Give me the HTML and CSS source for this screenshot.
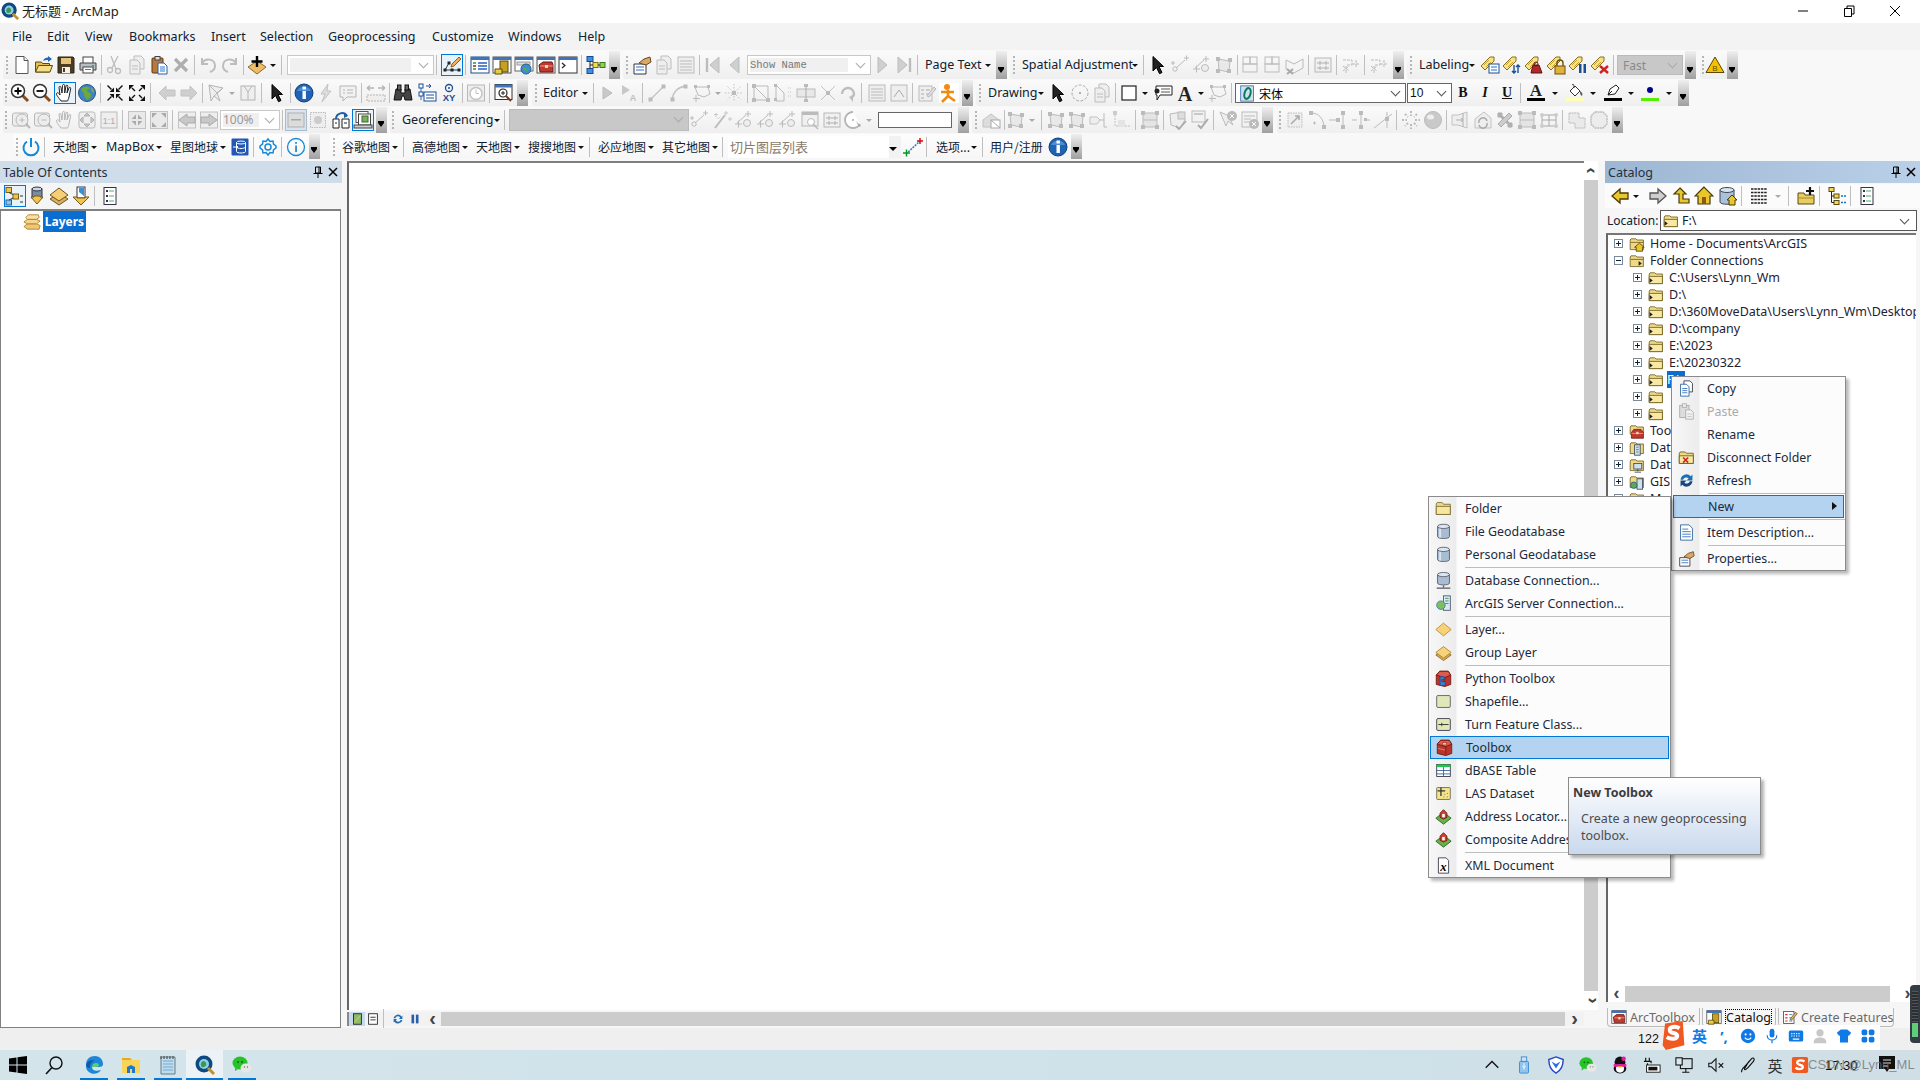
FILE: index.html
```html
<!DOCTYPE html>
<html lang="en">
<head>
<meta charset="utf-8">
<title>ArcMap</title>
<link rel="stylesheet" href="styles.css">
</head>
<body>
<svg class="defs" xmlns="http://www.w3.org/2000/svg">
<!-- colored tools -->
<symbol id="new" viewBox="0 0 20 20"><path d="M4 1.5h8l4 4v13H4z" fill="#fff" stroke="#555"/><path d="M12 1.5v4h4" fill="#eee" stroke="#555"/></symbol>
<symbol id="open" viewBox="0 0 20 20"><path d="M1.5 17V7h6l1 1.500h7V17z" fill="#e3bf55" stroke="#5f4a10"/><path d="M1.500 17l3-6.500h14L16 17z" fill="#f7de85" stroke="#5f4a10"/><path d="M9 6c1-3 3-3.500 5-3.500V1l4 3-4 3V5c-2 0-3 0-5 1z" fill="#2468b8"/></symbol>
<symbol id="save" viewBox="0 0 20 20"><path d="M2 2h15l1 1v15H2z" fill="#4b3d24" stroke="#2d2515"/><rect x="5" y="3" width="10" height="6" fill="#e4c27a"/><rect x="6" y="12" width="8" height="6" fill="#f5f1e6"/><rect x="7" y="13" width="2" height="4" fill="#4b3d24"/></symbol>
<symbol id="print" viewBox="0 0 20 20"><rect x="5" y="2" width="10" height="7" fill="#fff" stroke="#444"/><path d="M2 8h16v7H2z" fill="#b9bec6" stroke="#444"/><rect x="5" y="12" width="10" height="6" fill="#fff" stroke="#444"/><rect x="7" y="14" width="6" height="1" fill="#2d7fd0"/><rect x="14" y="10" width="2" height="1.500" fill="#3a3"/></symbol>
<symbol id="paste" viewBox="0 0 20 20"><rect x="3" y="3" width="11" height="15" rx="1" fill="#b9793a" stroke="#5a3413"/><rect x="6" y="1.500" width="5" height="3.500" fill="#ddd" stroke="#444"/><path d="M9 8h6l3 3v8H9z" fill="#fff" stroke="#2a5fa8"/><path d="M11 12h5M11 14h5M11 16h5" stroke="#2a7ad0"/></symbol>
<symbol id="add" viewBox="0 0 20 20"><path d="M1 12l9-6 9 6-9 7z" fill="#eebc68" stroke="#8a6a25"/><path d="M10 1v11M4.500 6.500h11" stroke="#000" stroke-width="2.400"/></symbol>
<symbol id="edit" viewBox="0 0 20 20"><path d="M3 15h14" stroke="#333"/><path d="M3 15L7 8" stroke="#333"/><rect x="1.500" y="13.500" width="3" height="3" fill="#222"/><rect x="8.500" y="13.500" width="3" height="3" fill="#222"/><rect x="15.500" y="13.500" width="3" height="3" fill="#222"/><rect x="5.500" y="6.500" width="3" height="3" fill="#222"/><path d="M9 12l1-3 7-7 2 2-7 7z" fill="#f2b05a" stroke="#96601b"/></symbol>
<symbol id="wtoc" viewBox="0 0 20 20"><rect x="1" y="2" width="18" height="16" fill="#fff" stroke="#1f4e8c"/><rect x="1" y="2" width="18" height="3" fill="#3f74bb"/><path d="M3 8h3M3 11h3M3 14h3" stroke="#2a9a3a" stroke-width="1.500"/><path d="M8 8h9M8 11h9M8 14h9" stroke="#2a5fc0" stroke-width="1.500"/><path d="M3 11h3" stroke="#d33" stroke-width="1.500"/></symbol>
<symbol id="wcat" viewBox="0 0 20 20"><rect x="1" y="2" width="18" height="16" fill="#fff" stroke="#555"/><rect x="1" y="2" width="18" height="3" fill="#3f74bb"/><rect x="8" y="6" width="8" height="11" fill="#c4a124" stroke="#5a4a0c"/><path d="M3 14h7v5H3z" fill="#e9cf40" stroke="#5a4a0c"/></symbol>
<symbol id="wsearch" viewBox="0 0 20 20"><rect x="1" y="2" width="18" height="14" fill="#fff" stroke="#666"/><rect x="1" y="2" width="18" height="3" fill="#3f74bb"/><rect x="3" y="7" width="13" height="3" fill="#ddd" stroke="#999"/><circle cx="12" cy="14" r="5" fill="#3f8fcc" stroke="#1f5f8c"/><path d="M9 12c2 0 3 2 5 3-2 2-4 0-5-3z" fill="#5ab03a"/></symbol>
<symbol id="wbox" viewBox="0 0 20 20"><rect x="1" y="2" width="18" height="16" fill="#fff" stroke="#555"/><rect x="1" y="2" width="18" height="3" fill="#3f74bb"/><path d="M3 10l4-3h9l1 3v7H4z" fill="#c0392f" stroke="#6e1710"/><path d="M4 11h13" stroke="#e8a09a"/><rect x="9" y="10" width="3" height="3" fill="#e9d8b0"/></symbol>
<symbol id="wpy" viewBox="0 0 20 20"><rect x="1" y="2" width="18" height="16" fill="#fff" stroke="#333"/><rect x="1" y="2" width="18" height="3" fill="#3f74bb"/><path d="M4 8l3 2.500L4 13" fill="none" stroke="#222" stroke-width="1.200"/></symbol>
<symbol id="model" viewBox="0 0 20 20"><rect x="1" y="1.500" width="6" height="5" fill="#3f8fe0" stroke="#134c90"/><rect x="1" y="13.500" width="6" height="5" fill="#3f8fe0" stroke="#134c90"/><rect x="7" y="7.500" width="5" height="5" fill="#f0e04e" stroke="#7a6c10"/><rect x="14" y="7.500" width="5" height="5" fill="#8ed05a" stroke="#3a7a18"/><path d="M4 6.500V10h3M4 13.500V10M12 10h2" fill="none" stroke="#222"/></symbol>
<symbol id="zin" viewBox="0 0 20 20"><path d="M12 12l6 6" stroke="#8a4a1a" stroke-width="3"/><circle cx="8" cy="8" r="6.500" fill="#fff" stroke="#333" stroke-width="1.500"/><path d="M8 4.500v7M4.500 8h7" stroke="#000" stroke-width="1.800"/></symbol>
<symbol id="zout" viewBox="0 0 20 20"><path d="M12 12l6 6" stroke="#8a4a1a" stroke-width="3"/><circle cx="8" cy="8" r="6.500" fill="#fff" stroke="#333" stroke-width="1.500"/><path d="M4.500 8h7" stroke="#000" stroke-width="1.800"/></symbol>
<symbol id="hand" viewBox="0 0 20 20"><path d="M6 18c-2-3-5-6-4.500-7.500S4 10 5 12L4 4.500C4 3 5.800 3 6 4.500L7 10 7.500 2.500C7.800 1 9.600 1 9.700 2.500V10l1.300-7c.4-1.500 2-1 1.800.5L12 10l2-5c.6-1.200 2-.6 1.700.7L14 14c-.5 2-1 3-1.500 4z" fill="#fff" stroke="#222"/></symbol>
<symbol id="hand2" viewBox="0 0 20 20"><path d="M6 18c-2-3-5-6-4.500-7.500S4 10 5 12L4 4.500C4 3 5.800 3 6 4.500L7 10 7.500 2.500C7.800 1 9.600 1 9.700 2.500V10l1.300-7c.4-1.500 2-1 1.800.5L12 10l2-5c.6-1.200 2-.6 1.700.7L14 14c-.5 2-1 3-1.500 4z" fill="#f2f2f2" stroke="#b5b5b5"/></symbol>
<symbol id="globe" viewBox="0 0 20 20"><circle cx="10" cy="10" r="8.500" fill="#3e84c6" stroke="#27557e"/><path d="M5 5c3-2 6-1 8 0-1 2-3 1-3 3 1 2 4 1 4 4s-3 4-4 5c-1-3-3-3-3-6S3 9 5 5z" fill="#6cab3a"/><path d="M14 4c2 2 3 4 3 6-2-1-3-3-3-6z" fill="#a8a040"/></symbol>
<symbol id="fzin" viewBox="0 0 20 20"><g fill="#111"><path d="M9 9V4.500L4.500 9z"/><path d="M11 9V4.500L15.500 9z"/><path d="M9 11v4.500L4.500 11z"/><path d="M11 11v4.500L15.500 11z"/></g><path d="M2.500 2.500l4 4M17.500 2.500l-4 4M2.500 17.500l4-4M17.500 17.500l-4-4" stroke="#111" stroke-width="1.400"/></symbol>
<symbol id="fzout" viewBox="0 0 20 20"><g fill="#111"><path d="M2 2h5L2 7z"/><path d="M18 2h-5l5 5z"/><path d="M2 18v-5l5 5z"/><path d="M18 18h-5l5-5z"/></g><path d="M8 8L5 5M12 8l3-3M8 12l-3 3M12 12l3 3" stroke="#111" stroke-width="1.400"/></symbol>
<symbol id="arrow" viewBox="0 0 20 20"><path d="M5 1.500l10.500 10H11l3 6-2.500 1.200-3-6.200L5 16z" fill="#222" stroke="#000"/></symbol>
<symbol id="info" viewBox="0 0 20 20"><circle cx="10" cy="10" r="9" fill="#1f63b5" stroke="#123d78"/><path d="M3 8a8 8 0 0114 0z" fill="#5f9fe0" opacity=".7"/><rect x="8.500" y="8" width="3.400" height="8" fill="#fff"/><rect x="8.500" y="3.500" width="3.400" height="3" fill="#fff"/></symbol>
<symbol id="binoc" viewBox="0 0 20 20"><path d="M3 6h5v4h4V6h5l2 11h-7l-1-4H9l-1 4H1z" fill="#444" stroke="#111"/><rect x="4.500" y="2" width="3.500" height="5" fill="#666" stroke="#111"/><rect x="12" y="2" width="3.500" height="5" fill="#666" stroke="#111"/></symbol>
<symbol id="route" viewBox="0 0 20 20"><path d="M4 3v8h12M4 11v6" fill="none" stroke="#2a6fc0"/><rect x="2" y="1" width="4" height="4" fill="#fff" stroke="#1b4f95"/><rect x="2" y="9" width="4" height="4" fill="#fff" stroke="#1b4f95"/><path d="M9 3h5l-2-2M14 3l-2 2" fill="none" stroke="#1b4f95"/><rect x="7" y="9" width="12" height="9" fill="#fff" stroke="#1b4f95"/><path d="M9 12h8M9 15h8" stroke="#1b4f95"/></symbol>
<symbol id="xy" viewBox="0 0 20 20"><circle cx="10" cy="5" r="3.500" fill="none" stroke="#1b4f95" stroke-width="1.300"/><circle cx="10" cy="5" r="1" fill="#1b4f95"/><text x="10" y="18" text-anchor="middle" font-family="Liberation Sans" font-weight="700" font-size="9.500" fill="#1b4f95">XY</text></symbol>
<symbol id="viewer" viewBox="0 0 20 20"><rect x="1" y="1.500" width="17" height="15" fill="#fff" stroke="#333"/><rect x="1" y="1.500" width="17" height="3" fill="#3f74bb"/><circle cx="9" cy="10" r="4" fill="#fff" stroke="#222" stroke-width="1.200"/><path d="M7 10h4M9 8v4" stroke="#222"/><path d="M12 13l5 5" stroke="#8a3a1a" stroke-width="2"/></symbol>
<symbol id="man" viewBox="0 0 20 20"><rect width="20" height="20" fill="#fff"/><circle cx="8" cy="4" r="3" fill="#f08a10"/><path d="M2 9h13M9 7v6L3 19M9 13l7 5" fill="none" stroke="#f08a10" stroke-width="2.600"/></symbol>
<symbol id="oicon" viewBox="0 0 20 20"><rect x="2" y="1" width="15" height="18" fill="#cfe0f5" stroke="#3a6fb0"/><ellipse cx="10" cy="10" rx="3.500" ry="6.500" fill="none" stroke="#0f7a55" stroke-width="2.400" transform="rotate(15 10 10)"/></symbol>
<symbol id="circ" viewBox="0 0 20 20"><circle cx="10" cy="10" r="8" fill="none" stroke="#aaa" stroke-dasharray="3 1.500"/><circle cx="10" cy="10" r="1" fill="#999"/></symbol>
<symbol id="rect" viewBox="0 0 20 20"><rect x="3" y="3" width="14" height="14" fill="#fff" stroke="#222" stroke-width="1.200"/></symbol>
<symbol id="call" viewBox="0 0 20 20"><path d="M3 3h16v9H7l-3 5 0-5H3z" fill="#fff" stroke="#222"/><path d="M8 6h9M8 9h9" stroke="#555"/><circle cx="4" cy="8" r="2.500" fill="#222"/></symbol>
<symbol id="bigA" viewBox="0 0 20 20"><text x="10" y="17.500" text-anchor="middle" font-family="Liberation Serif" font-weight="700" font-size="20" fill="#222">A</text></symbol>
<symbol id="fcA" viewBox="0 0 20 20"><text x="10" y="13" text-anchor="middle" font-family="Liberation Serif" font-weight="700" font-size="17" fill="#222">A</text><rect x="1" y="15" width="18" height="3" fill="#000"/></symbol>
<symbol id="fcB" viewBox="0 0 20 20"><path d="M5 8l5-5 5 5-5 5z" fill="#fff" stroke="#333"/><path d="M7 2C9 0 9 3 9 5" fill="none" stroke="#333"/><path d="M15 8c2 1 3 3 2 5-2-1-2-3-2-5z" fill="#555"/><rect x="1" y="15" width="18" height="3" fill="#ffffb4"/></symbol>
<symbol id="fcP" viewBox="0 0 20 20"><path d="M5 12l2-6 6-4 3 3-4 6z" fill="#fff" stroke="#222"/><path d="M5 12l4-4" stroke="#222"/><rect x="1" y="15" width="18" height="3" fill="#000"/></symbol>
<symbol id="fcM" viewBox="0 0 20 20"><circle cx="10" cy="7" r="3" fill="#00008c"/><rect x="1" y="15" width="18" height="3" fill="#55f000"/></symbol>
<!-- labeling -->
<symbol id="tag" viewBox="0 0 20 20"><path d="M1 11l9-9 4 0 0 4-9 9z" fill="#f7e48a" stroke="#8a6d18"/><path d="M4 10l5-5M6 12l5-5" stroke="#c7a42e"/></symbol>
<symbol id="lb1" viewBox="0 0 20 20"><use href="#tag" width="20" height="20"/><rect x="9" y="9" width="10" height="9" fill="#fff" stroke="#1b4f95"/><path d="M11 12h6M11 15h6" stroke="#1b6fc8"/></symbol>
<symbol id="lb2" viewBox="0 0 20 20"><use href="#tag" width="20" height="20"/><path d="M12 10v8m-2-2l2 2 2-2M16 18v-8m-2 2l2-2 2 2" fill="none" stroke="#1b4f95" stroke-width="1.400"/></symbol>
<symbol id="lb3" viewBox="0 0 20 20"><use href="#tag" width="20" height="20"/><path d="M7 18l2-8h6l3 8z" fill="#b0282a" stroke="#5e1012"/><circle cx="12" cy="9" r="2" fill="none" stroke="#5e1012"/></symbol>
<symbol id="lb4" viewBox="0 0 20 20"><use href="#tag" width="20" height="20"/><rect x="9" y="11" width="10" height="8" fill="#e2b13c" stroke="#6f4f0c"/><path d="M11 11V8a3 3 0 016 0v3" fill="none" stroke="#6f4f0c" stroke-width="1.400"/></symbol>
<symbol id="lb5" viewBox="0 0 20 20"><use href="#tag" width="20" height="20"/><rect x="11" y="9" width="2.500" height="9" fill="#1b4f95"/><rect x="15.500" y="9" width="2.500" height="9" fill="#1b4f95"/></symbol>
<symbol id="lb6" viewBox="0 0 20 20"><use href="#tag" width="20" height="20"/><path d="M10 11l8 7M18 11l-8 7" stroke="#d02020" stroke-width="2.400"/></symbol>
<symbol id="warn" viewBox="0 0 20 20"><path d="M10 2l9 15.500H1z" fill="#f6c200" stroke="#5a4700"/><text x="10" y="15.500" text-anchor="middle" font-family="Liberation Sans" font-size="8" fill="#6a4d00">B</text></symbol>
<!-- row 4 -->
<symbol id="power" viewBox="0 0 20 20"><path d="M6 4.500a7.500 7.500 0 108 0" fill="none" stroke="#1788d8" stroke-width="2"/><path d="M10 1v9" stroke="#1788d8" stroke-width="2"/></symbol>
<symbol id="bdb" viewBox="0 0 20 20"><rect x="1.500" y="1.500" width="17" height="17" rx="1" fill="#2257b5"/><ellipse cx="11" cy="5.500" rx="4.500" ry="1.500" fill="none" stroke="#fff"/><path d="M6.500 5.500v9c0 2 9 2 9 0v-9M6.500 10c1 2 8 2 9 0" fill="none" stroke="#fff"/><path d="M3 10h5m-2-2l2 2-2 2" fill="none" stroke="#fff"/></symbol>
<symbol id="gear" viewBox="0 0 20 20"><path d="M10 2l2 2.500 3-.5.500 3L18 9v2l-2.500 2-.5 3-3-.5L10 18l-2-2.500-3 .5-.5-3L2 11V9l2.500-2L5 4l3 .5z" fill="none" stroke="#1788d8" stroke-width="1.500"/><circle cx="10" cy="10" r="3" fill="none" stroke="#1788d8" stroke-width="1.500"/></symbol>
<symbol id="infoo" viewBox="0 0 20 20"><circle cx="10" cy="10" r="8.500" fill="none" stroke="#1788d8" stroke-width="1.300"/><rect x="9.200" y="8.500" width="1.700" height="6.500" fill="#1788d8"/><rect x="9.200" y="5" width="1.700" height="1.800" fill="#1788d8"/></symbol>
<symbol id="tile" viewBox="0 0 20 20"><path d="M3 17L17 4" stroke="#1c7ee0" stroke-width="1.500" stroke-dasharray="2 1"/><path d="M14 4h6M17 1v6" stroke="#e00000" stroke-width="1.400"/><path d="M0 16h7M3.500 12.500v7" stroke="#009a20" stroke-width="1.400"/></symbol>
<!-- row 3 coloured -->
<symbol id="lockp" viewBox="0 0 20 20"><path d="M2 9h6v9H2zM11 9h7v9h-7z" fill="#fff" stroke="#222"/><path d="M5 9C5 3 13 1 16 6" fill="none" stroke="#1b5fa8" stroke-width="2"/><path d="M13 3l4 3-4 2z" fill="#1b5fa8"/><path d="M4 13h2M13 13h3" stroke="#222"/></symbol>
<symbol id="layout" viewBox="0 0 20 20"><rect x="3" y="1.500" width="12" height="11" fill="#fff" stroke="#555"/><rect x="5.500" y="4" width="12" height="11" fill="#fff" stroke="#444"/><rect x="9" y="6" width="6" height="6" fill="#7ab060" stroke="#3a6a2a"/><rect x="1" y="15" width="18" height="3" fill="#ccc" stroke="#444"/></symbol>
<!-- catalog bar -->
<symbol id="cback" viewBox="0 0 20 20"><path d="M2 10l8-7v4h8v6h-8v4z" fill="#e9c52e" stroke="#4a3a05" stroke-width="1.300"/></symbol>
<symbol id="cfwd" viewBox="0 0 20 20"><path d="M18 10l-8-7v4H2v6h8v4z" fill="#cfcfcf" stroke="#555" stroke-width="1.300"/></symbol>
<symbol id="cup" viewBox="0 0 20 20"><path d="M9 2l6 6h-3v5h6v4H8V8H3z" fill="#e9c52e" stroke="#4a3a05" stroke-width="1.200"/></symbol>
<symbol id="chome" viewBox="0 0 20 20"><path d="M10 1L1 10h3v8h12v-8h3z" fill="#e9c52e" stroke="#4a3a05" stroke-width="1.200"/><rect x="8" y="11" width="4" height="7" fill="#8a5a12"/></symbol>
<symbol id="cdbh" viewBox="0 0 20 20"><path d="M2 4v12c0 3 14 3 14 0V4" fill="#a9c2dc" stroke="#445"/><ellipse cx="9" cy="4" rx="7" ry="2.500" fill="#d6e3f0" stroke="#445"/><path d="M14 9l-5 5h2v5h6v-5h2z" fill="#e9c52e" stroke="#4a3a05"/></symbol>
<symbol id="cgrid" viewBox="0 0 20 20"><path d="M2 3h16M2 6.500h16M2 10h16M2 13.500h16M2 17h16" stroke="#222" stroke-dasharray="2.500 .8" stroke-width="1.300"/></symbol>
<symbol id="cfold" viewBox="0 0 20 20"><path d="M2 18V7h6l1 2h9v9z" fill="#e9cc60" stroke="#5a4a10"/><path d="M2 12h16" stroke="#a58a28"/><path d="M14 1v8M10 5h8" stroke="#111" stroke-width="2.200"/></symbol>
<symbol id="ctree" viewBox="0 0 20 20"><rect x="2" y="1.500" width="5" height="4" fill="#f3d75a" stroke="#5a4a10"/><rect x="7" y="8" width="5" height="4" fill="#f3d75a" stroke="#5a4a10"/><rect x="7" y="14.500" width="5" height="4" fill="#f3d75a" stroke="#5a4a10"/><path d="M4.500 5.500V16.500H7M4.500 10H7" fill="none" stroke="#222"/><path d="M14 10h2M17 10h2M14 16.500h2M17 16.500h2" stroke="#1b6fc8" stroke-width="1.400"/></symbol>
<symbol id="clist" viewBox="0 0 20 20"><rect x="4" y="1.500" width="12" height="17" fill="#fff" stroke="#334"/><rect x="6" y="4" width="2" height="2" fill="#334"/><rect x="6" y="9" width="2" height="2" fill="#334"/><rect x="6" y="14" width="2" height="2" fill="#334"/><path d="M9 5h5M9 10h5M9 15h5" stroke="#5a7"/></symbol>
<symbol id="tocdraw" viewBox="0 0 20 20"><rect x="1" y="1.500" width="5.500" height="5" fill="#eec54a" stroke="#7a6010"/><rect x="8" y="8" width="5.500" height="5" fill="#eec54a" stroke="#7a6010"/><rect x="1" y="14" width="5.500" height="5" fill="#8fc2ea" stroke="#2a5f90"/><path d="M4 6.500l4 2M4 14l4-2" stroke="#333"/><path d="M15 10h3M15 16h3" stroke="#333"/></symbol>
<symbol id="tocdb" viewBox="0 0 20 20"><rect x="5" y="3" width="10" height="9" fill="#7a8ca0" stroke="#334"/><ellipse cx="10" cy="3" rx="5" ry="2" fill="#c8d8e8" stroke="#334"/><path d="M4 11h3v-1h6v1h3l-6 7z" fill="#f0c450" stroke="#7a5a10"/></symbol>
<symbol id="toclay" viewBox="0 0 20 20"><path d="M1 13l9-6 9 6-9 6z" fill="#d8b060" stroke="#6a5420"/><path d="M1 9l9-7 9 7-9 6z" fill="#f5cf72" stroke="#6a5420"/></symbol>
<symbol id="tocsrc" viewBox="0 0 20 20"><rect x="6" y="1" width="8" height="11" fill="#fff" stroke="#334"/><path d="M8 2h5v8l-5-4z" fill="#3a8fd0"/><path d="M2 11h4v1h8v-1h4l-8 8z" fill="#f0c450" stroke="#7a5a10"/></symbol>
<symbol id="pin" viewBox="0 0 12 12"><path d="M3.500 1h5v6h-5zM1.500 7.500h9M6 8v4M7 1v6" fill="none" stroke="#000"/></symbol>
<symbol id="close" viewBox="0 0 12 12"><path d="M2 2l8 8M10 2l-8 8" stroke="#000" stroke-width="1.500"/></symbol>
<symbol id="layers" viewBox="0 0 20 20"><path d="M1 15l4 3h13l1-4-4-2H5z" fill="#edc77a" stroke="#b0822a"/><path d="M1 10l4-3h10l4 2-4 3H5z" fill="#f5d68f" stroke="#b0822a"/><path d="M3 5l3-3h11l1 3-3 2H5z" fill="#f8e0a8" stroke="#b0822a"/></symbol>
<!-- tree -->
<symbol id="fold" viewBox="0 0 20 20"><path d="M1.500 17V5l1-1.500h6L10 5h8v12z" fill="#efd887" stroke="#6c5a1a"/><path d="M1.500 8h16.500v9H1.500z" fill="#f8e8a3" stroke="#6c5a1a"/><path d="M2 10l4 3-4 3z" fill="#222"/></symbol>
<symbol id="fhome" viewBox="0 0 20 20"><path d="M1.500 17V5l1-1.500h6L10 5h8v12z" fill="#efd887" stroke="#6c5a1a"/><path d="M2 8h16" stroke="#6c5a1a"/><path d="M13 9l-6 5h2v5h8v-5h2z" fill="#e9c52e" stroke="#4a3a05"/></symbol>
<symbol id="fconn" viewBox="0 0 20 20"><path d="M1.500 17V5l1-1.500h6L10 5h8v12z" fill="#efd887" stroke="#6c5a1a"/><path d="M2 8h16" stroke="#6c5a1a"/><path d="M12 10l4 3-4 3z" fill="#222"/></symbol>
<symbol id="fbox" viewBox="0 0 20 20"><path d="M1.500 14V5l1-1.500h6L10 5h8v9z" fill="#efd887" stroke="#6c5a1a"/><path d="M3 12l3-4h9l3 4v7H3z" fill="#c0392f" stroke="#6e1710"/><path d="M3 13h15" stroke="#eaa"/><rect x="9" y="11" width="3" height="3" fill="#f0d8a0"/></symbol>
<symbol id="fdb" viewBox="0 0 20 20"><path d="M1.500 17V5l1-1.500h6L10 5h8v12z" fill="#efd887" stroke="#6c5a1a"/><rect x="7" y="6" width="7" height="13" fill="#cfe0ee" stroke="#345"/><path d="M9 9h3M9 12h3M9 15h3" stroke="#2a7a5a"/></symbol>
<symbol id="fdbs" viewBox="0 0 20 20"><path d="M1.500 17V5l1-1.500h6L10 5h8v12z" fill="#efd887" stroke="#6c5a1a"/><rect x="6" y="8" width="10" height="7" fill="#cfe0ee" stroke="#345"/><path d="M11 15v3M7 19h8" stroke="#345"/></symbol>
<symbol id="fgis" viewBox="0 0 20 20"><path d="M1.500 17V5l1-1.500h6L10 5h8v12z" fill="#efd887" stroke="#6c5a1a"/><rect x="10" y="6" width="7" height="13" fill="#cfe0ee" stroke="#345"/><circle cx="6" cy="14" r="4" fill="#60a850" stroke="#2a5a90"/></symbol>
<!-- menu -->
<symbol id="mcopy" viewBox="0 0 20 20"><path d="M7 1h7l3 3v10H7z" fill="#fff" stroke="#334"/><path d="M3 5h7l3 3v11H3z" fill="#fff" stroke="#2a5f9a"/><path d="M5 10h6M5 12.500h6M5 15h6" stroke="#2a6fc0"/></symbol>
<symbol id="mpaste" viewBox="0 0 20 20"><rect x="2" y="3" width="11" height="14" fill="#ddd" stroke="#aaa"/><rect x="5" y="1" width="5" height="4" fill="#eee" stroke="#aaa"/><path d="M9 8h6l3 3v8H9z" fill="#f2f2f2" stroke="#aaa"/><path d="M11 13h5M11 16h5" stroke="#bbb"/></symbol>
<symbol id="mdisc" viewBox="0 0 20 20"><path d="M1.500 17V5l1-1.500h6L10 5h8v12z" fill="#efd887" stroke="#6c5a1a"/><path d="M1.500 8H18v9H1.500z" fill="#f8e8a3" stroke="#6c5a1a"/><path d="M6 10l6 6M12 10l-6 6" stroke="#d02020" stroke-width="1.800"/></symbol>
<symbol id="mref" viewBox="0 0 20 20"><path d="M3 9a7 7 0 0112-4l2-2v7h-7l2.500-2.500A4 4 0 006 9z" fill="#1f6fb8"/><path d="M17 11a7 7 0 01-12 4l-2 2v-7h7l-2.500 2.500A4 4 0 0014 11z" fill="#16467e"/></symbol>
<symbol id="mdesc" viewBox="0 0 20 20"><path d="M3 1h10l4 4v14H3z" fill="#fff" stroke="#2a5f9a"/><path d="M5 6h7M5 9h10M5 12h10M5 15h10" stroke="#2a6fc0"/></symbol>
<symbol id="mprop" viewBox="0 0 20 20"><path d="M2 9h12v10H2z" fill="#fff" stroke="#334"/><path d="M4 12h8M4 15h8" stroke="#2a6fc0"/><path d="M7 8l5-4 6-2 1 5-5 3z" fill="#d8a868" stroke="#6a4a20"/></symbol>
<symbol id="mfold" viewBox="0 0 20 20"><path d="M1.500 17V4.500l1-1.500h6L10 5h8v12z" fill="#efd887" stroke="#7a6a30"/><path d="M1.500 7.500H18V17H1.500z" fill="#f6e6a0" stroke="#7a6a30"/></symbol>
<symbol id="mdb" viewBox="0 0 20 20"><path d="M3 4v12c0 3 14 3 14 0V4" fill="#a8bdd4" stroke="#556"/><path d="M6 6v11" stroke="#dfe9f3" stroke-width="2"/><ellipse cx="10" cy="4" rx="7" ry="2.500" fill="#dbe6f1" stroke="#556"/></symbol>
<symbol id="msrv" viewBox="0 0 20 20"><path d="M3 3v10c0 3 14 3 14 0V3" fill="#a8bdd4" stroke="#556"/><ellipse cx="10" cy="3" rx="7" ry="2.500" fill="#dbe6f1" stroke="#556"/><path d="M10 16v2M2 19h16" stroke="#556" stroke-width="1.500"/></symbol>
<symbol id="marc" viewBox="0 0 20 20"><rect x="10" y="1" width="8" height="17" fill="#dce9f5" stroke="#456"/><path d="M12 4h4M12 7h4M12 10h4" stroke="#2a8a5a"/><circle cx="7" cy="12" r="5" fill="#7ec060" stroke="#3a7ab0"/></symbol>
<symbol id="mdia" viewBox="0 0 20 20"><path d="M1 10l9-7.500 9 7.500-9 7.500z" fill="#f6d27a" stroke="#c08a28"/></symbol>
<symbol id="mgrp" viewBox="0 0 20 20"><path d="M1 13l9-6 9 6-9 6.500z" fill="#d8a850" stroke="#8a6a28"/><path d="M1 10l9-7 9 7-9 6.500z" fill="#f6d27a" stroke="#a88030"/></symbol>
<symbol id="mpy" viewBox="0 0 20 20"><path d="M1.500 6l4-4.500h10l3 4.500v11l-7 2.500-10-2.500z" fill="#b9342b" stroke="#6e1710"/><path d="M1.500 6l10 3 7-3-3-4.500h-10z" fill="#dd5a4c" stroke="#6e1710"/><path d="M11.500 9v10" stroke="#7e1f18"/><path d="M6 8h5v3H8v3h4v4H6z" fill="#3f84d8" stroke="#1b4f95"/></symbol>
<symbol id="mshp" viewBox="0 0 20 20"><rect x="2" y="3" width="16" height="14" rx="1.500" fill="#e0e8b8" stroke="#556"/></symbol>
<symbol id="mturn" viewBox="0 0 20 20"><rect x="2" y="3" width="16" height="14" rx="1.500" fill="#e0e8b8" stroke="#334"/><path d="M4 10h5M8 8v4M9 10h7" stroke="#222"/></symbol>
<symbol id="mbox" viewBox="0 0 20 20"><path d="M1.500 6l4-4.500h10l3 4.500v11l-7 2.500-10-2.500z" fill="#b9342b" stroke="#6e1710"/><path d="M1.500 6l10 3 7-3-3-4.500h-10z" fill="#dd5a4c" stroke="#6e1710"/><path d="M11.500 9v10" stroke="#7e1f18"/><rect x="8" y="4.500" width="4" height="2.500" fill="#f0d8a0" stroke="#6e1710" stroke-width=".5"/><path d="M2.500 11l8 2" stroke="#e28a80"/></symbol>
<symbol id="mdbf" viewBox="0 0 20 20"><rect x="2" y="3" width="16" height="14" fill="#fff" stroke="#334"/><rect x="2" y="3" width="16" height="3" fill="#1cc848"/><path d="M2 10h16M2 14h16M10 6v11" stroke="#2a5f9a"/></symbol>
<symbol id="mlas" viewBox="0 0 20 20"><rect x="2" y="3" width="16" height="14" rx="1" fill="#f5e58a" stroke="#665"/><path d="M7 3v10M3 7h9" stroke="#333" stroke-width="1.500"/><path d="M11 11h1M14 10h1M10 14h1M14 14h1" stroke="#556"/></symbol>
<symbol id="mloc" viewBox="0 0 20 20"><path d="M1 12l9-7 9 7-9 7z" fill="#6ab04a" stroke="#2a6020"/><path d="M6 11V6l4-4 4 4v5l-4 2z" fill="#d04030" stroke="#6e1710"/><rect x="8.500" y="7" width="3" height="4" fill="#fff"/></symbol>
<symbol id="mxml" viewBox="0 0 20 20"><path d="M4 1h9l3 3v15H4z" fill="#fff" stroke="#334"/><text x="10" y="16" text-anchor="middle" font-family="Liberation Serif" font-style="italic" font-weight="700" font-size="15" fill="#000">x</text></symbol>
<symbol id="g25c" viewBox="0 0 20 20"><rect x="2" y="3" width="13" height="15" fill="#fff" stroke="#445"/><path d="M4 7h3M4 11h3M4 15h3" stroke="#d03030" stroke-width="1.500"/><path d="M9 7h4M9 11h4M9 15h4" stroke="#2a6fc0"/><path d="M10 13l7-9 2 2-7 8z" fill="#e8b060" stroke="#7a5a20"/></symbol>
<!-- gray -->
<symbol id="g1" viewBox="0 0 20 20"><g fill="none" stroke="#bdbdbd" stroke-width="1.300"><circle cx="5" cy="15" r="2.500"/><circle cx="13" cy="16" r="2.500"/><path d="M7 13L13 1M11 14L6 1"/></g></symbol>
<symbol id="g2" viewBox="0 0 20 20"><g fill="#eee" stroke="#bdbdbd"><path d="M7 1h7l3 3v10H7z"/><path d="M3 5h7l3 3v11H3z"/><path d="M5 11h6M5 14h6"/></g></symbol>
<symbol id="g3" viewBox="0 0 20 20"><path d="M4 4l12 12M16 4L4 16" stroke="#aeaeae" stroke-width="3.200"/></symbol>
<symbol id="g4" viewBox="0 0 20 20"><path d="M4 8c4-6 13-4 13 3 0 3-2 5-5 6M4 3v6h6" fill="none" stroke="#bdbdbd" stroke-width="2"/></symbol>
<symbol id="g5" viewBox="0 0 20 20"><path d="M16 8C12 2 3 4 3 11c0 3 2 5 5 6M16 3v6h-6" fill="none" stroke="#bdbdbd" stroke-width="2"/></symbol>
<symbol id="g6" viewBox="0 0 20 20"><path d="M2 10l7-7v4h9v6H9v4z" fill="#cfcfcf" stroke="#c2c2c2"/></symbol>
<symbol id="g7" viewBox="0 0 20 20"><path d="M18 10l-7-7v4H2v6h9v4z" fill="#cfcfcf" stroke="#c2c2c2"/></symbol>
<symbol id="g8" viewBox="0 0 20 20"><g fill="#eee" stroke="#b5b5b5"><path d="M3 2l14 3-6 5 3 8-6-5-3 5z"/><path d="M3 2l8 8M17 5L8 13"/></g></symbol>
<symbol id="g9" viewBox="0 0 20 20"><g fill="#efefef" stroke="#b5b5b5"><rect x="3" y="3" width="14" height="14"/><path d="M6 3l4 6v8M14 3l-4 6"/></g></symbol>
<symbol id="g10" viewBox="0 0 20 20"><path d="M12 1L5 11h4l-3 8 9-11h-4z" fill="#ddd" stroke="#c2c2c2"/></symbol>
<symbol id="g11" viewBox="0 0 20 20"><g fill="#f2f2f2" stroke="#b5b5b5"><path d="M2 3h16v11H9l-4 4v-4H2z"/><path d="M5 7h2M9 7h6M5 10h2M9 10h6"/></g></symbol>
<symbol id="g12" viewBox="0 0 20 20"><path d="M1 5h7M12 5h7M1 5l3-2.500M1 5l3 2.500M19 5l-3-2.500M19 5l-3 2.500" fill="none" stroke="#b5b5b5" stroke-width="1.300"/><rect x="1" y="12" width="18" height="6" fill="#eee" stroke="#b5b5b5" stroke-dasharray="2 1"/></symbol>
<symbol id="g13" viewBox="0 0 20 20"><rect x="1.500" y="2" width="17" height="16" fill="#eee" stroke="#b8b8b8"/><circle cx="10" cy="10.500" r="6" fill="#fff" stroke="#c2c2c2" stroke-width="1.500"/><path d="M10 6.500v4h3" fill="none" stroke="#c2c2c2"/></symbol>
<symbol id="g14" viewBox="0 0 20 20"><path d="M3 17L17 3" stroke="#c2c2c2" stroke-width="1.300"/><rect x="1.500" y="14.500" width="4" height="4" fill="#bbb"/><rect x="14.500" y="1.500" width="4" height="4" fill="#bbb"/></symbol>
<symbol id="g15" viewBox="0 0 20 20"><path d="M3 17C4 9 9 4 17 3" fill="none" stroke="#c2c2c2" stroke-width="1.300"/><rect x="1.500" y="14.500" width="4" height="4" fill="#bbb"/><rect x="14.500" y="1.500" width="4" height="4" fill="#bbb"/></symbol>
<symbol id="g16" viewBox="0 0 20 20"><path d="M3 4h13l2 7-6 3-6-2z" fill="none" stroke="#bbb"/><path d="M4 12v7M1 15.500h7" stroke="#bbb"/><rect x="2" y="2" width="3" height="3" fill="#bbb"/><rect x="15" y="2" width="3" height="3" fill="#bbb"/></symbol>
<symbol id="g17" viewBox="0 0 20 20"><path d="M10 1v18M1 10h18M3.500 3.500l13 13M16.500 3.500l-13 13" stroke="#c2c2c2" stroke-dasharray="1.500 1.500"/><rect x="8" y="8" width="4" height="4" fill="#bbb"/></symbol>
<symbol id="g18" viewBox="0 0 20 20"><path d="M3 3l14 14H3zM3 3h14v14" fill="none" stroke="#bbb"/><rect x="1" y="1" width="4" height="4" fill="#bbb"/><rect x="1" y="15" width="4" height="4" fill="#bbb"/><rect x="15" y="15" width="4" height="4" fill="#bbb"/></symbol>
<symbol id="g19" viewBox="0 0 20 20"><path d="M3 2l8 8v8H3z" fill="none" stroke="#bbb"/><rect x="1" y="1" width="3" height="3" fill="#bbb"/><rect x="1" y="15" width="3" height="3" fill="#bbb"/><path d="M15 5h4M15 9h4M15 13h4" stroke="#c8c8c8" stroke-dasharray="1 1"/></symbol>
<symbol id="g20" viewBox="0 0 20 20"><rect x="1" y="6" width="18" height="8" fill="#e8e8e8" stroke="#bbb"/><path d="M10 1v18" stroke="#aaa"/><rect x="8" y="1" width="4" height="3" fill="#bbb"/><rect x="8" y="16" width="4" height="3" fill="#bbb"/></symbol>
<symbol id="g21" viewBox="0 0 20 20"><path d="M3 3l14 14M17 3L3 17" stroke="#c2c2c2"/><rect x="8" y="8" width="4" height="4" fill="#bbb"/></symbol>
<symbol id="g22" viewBox="0 0 20 20"><path d="M4 11a6 6 0 1112 0c0 2-2 3-3 3" fill="none" stroke="#bdbdbd" stroke-width="2.400"/><path d="M11 14l4-2v7z" fill="#bdbdbd"/></symbol>
<symbol id="g23" viewBox="0 0 20 20"><rect x="2" y="2" width="16" height="16" fill="#eee" stroke="#bbb"/><path d="M4 6h12M4 9h12M4 12h12M4 15h12" stroke="#bbb"/></symbol>
<symbol id="g24" viewBox="0 0 20 20"><rect x="2" y="2" width="16" height="16" fill="#eee" stroke="#bbb"/><path d="M5 14l5-7 5 7" fill="none" stroke="#aaa"/></symbol>
<symbol id="g25" viewBox="0 0 20 20"><rect x="2" y="3" width="13" height="15" fill="#eee" stroke="#bbb"/><path d="M4 7h3M4 11h3M4 15h3M9 7h4M9 11h4" stroke="#aaa"/><path d="M10 13l7-9 2 2-7 8z" fill="#ddd" stroke="#bbb"/></symbol>
<symbol id="g26" viewBox="0 0 20 20"><circle cx="5" cy="14" r="2.200" fill="none" stroke="#bbb"/><path d="M6 13L15 5" stroke="#bbb"/><path d="M14 3h5M16.500 .5v5M1 8h4M3 6v4" stroke="#bbb"/></symbol>
<symbol id="g27" viewBox="0 0 20 20"><path d="M13 5L3 18" stroke="#bbb" stroke-width="2"/><path d="M14 1v4M12 3h4M4 3v3M2 4.500h4M18 7v4M16 9h4" stroke="#c8c8c8"/><path d="M3 6l3 3 3-3" fill="none" stroke="#c8c8c8" stroke-dasharray="1 1"/></symbol>
<symbol id="g28" viewBox="0 0 20 20"><path d="M3 13L12 5" stroke="#bbb"/><path d="M14 1v6M11 4h6M1 14h7M4.500 10.500v7" stroke="#bbb"/><circle cx="13" cy="13" r="3.500" fill="#eee" stroke="#bbb"/></symbol>
<symbol id="g29" viewBox="0 0 20 20"><rect x="2" y="2" width="16" height="14" fill="#f0f0f0" stroke="#b8b8b8"/><rect x="2" y="2" width="16" height="3" fill="#bbb"/><circle cx="11" cy="12" r="3.500" fill="#fff" stroke="#bbb"/><path d="M13 14l5 5" stroke="#bbb" stroke-width="1.500"/></symbol>
<symbol id="g30" viewBox="0 0 20 20"><rect x="2" y="3" width="16" height="14" fill="#f0f0f0" stroke="#b8b8b8"/><path d="M4 8h12M4 13h12M7 6v4M13 6v4M7 11v4M13 11v4" stroke="#b0b0b0"/></symbol>
<symbol id="g31" viewBox="0 0 20 20"><path d="M10 2a8 8 0 107 12" fill="#fff" stroke="#b5b5b5" stroke-width="1.800"/><circle cx="10" cy="10" r="1" fill="#aaa"/><path d="M13 11l5 5-2 1-1-2z" fill="#aaa"/></symbol>
<symbol id="g32" viewBox="0 0 20 20"><path d="M1 10l8-6 8 6v7H1z" fill="#ddd" stroke="#c2c2c2"/><rect x="9" y="10" width="9" height="8" fill="#fff" stroke="#aaa"/><path d="M9 10l9 8" stroke="#aaa"/></symbol>
<symbol id="g33" viewBox="0 0 20 20"><path d="M4 4l12 2-1 11-10-2z" fill="#e8e8e8" stroke="#bbb"/><rect x="2" y="2" width="4" height="4" fill="#bbb"/><rect x="14" y="3" width="4" height="4" fill="#bbb"/><rect x="2" y="14" width="4" height="4" fill="#bbb"/><rect x="13" y="14" width="4" height="4" fill="#bbb"/></symbol>
<symbol id="g34" viewBox="0 0 20 20"><path d="M1 14h7l3-4-3-3H1z" fill="#eee" stroke="#c2c2c2"/><path d="M10 10h5M15 3v14h3" fill="none" stroke="#bbb"/></symbol>
<symbol id="g35" viewBox="0 0 20 20"><path d="M3 2v14h15" fill="none" stroke="#c2c2c2" stroke-dasharray="2 1"/><rect x="6" y="10" width="7" height="7" fill="#e4e4e4"/><rect x="1" y="1" width="4" height="4" fill="#ccc"/></symbol>
<symbol id="g36" viewBox="0 0 20 20"><path d="M2 4l12-2 3 8-5 8-9-3z" fill="#eee" stroke="#bbb"/><rect x="10" y="2" width="7" height="7" fill="#ddd" stroke="#bbb"/><path d="M8 16l3 3 7-8" fill="none" stroke="#aaa" stroke-width="1.800"/></symbol>
<symbol id="g37" viewBox="0 0 20 20"><rect x="2" y="1" width="13" height="11" fill="#f2f2f2" stroke="#bbb"/><rect x="4" y="3" width="9" height="2" fill="#c8c8c8"/><path d="M8 15l3 3 7-9" fill="none" stroke="#aaa" stroke-width="2"/></symbol>
<symbol id="g38" viewBox="0 0 20 20"><path d="M2 2l6 14 2-5 5 4-3-6 4-1z" fill="#eee" stroke="#bbb"/><circle cx="14" cy="6" r="5" fill="#bbb"/><path d="M12 4l4 4M16 4l-4 4" stroke="#fff"/></symbol>
<symbol id="g39" viewBox="0 0 20 20"><rect x="2" y="2" width="15" height="15" fill="#f2f2f2" stroke="#bbb"/><path d="M4 6h11M4 9h7M4 12h6" stroke="#bbb"/><circle cx="14" cy="14" r="5" fill="#bbb"/><path d="M12 12l4 4M16 12l-4 4" stroke="#fff"/></symbol>
<symbol id="g40" viewBox="0 0 20 20"><rect x="2" y="2" width="7" height="7" fill="none" stroke="#bbb"/><rect x="9" y="2" width="7" height="7" fill="none" stroke="#bbb"/><rect x="2" y="9" width="14" height="8" fill="none" stroke="#bbb"/></symbol>
<symbol id="g41" viewBox="0 0 20 20"><path d="M1 5l8 4 9-5v9l-9 5-8-4z" fill="none" stroke="#bbb"/><path d="M2 14l6 5M8 14l-6 5" stroke="#aaa" stroke-width="2"/></symbol>
<symbol id="g42" viewBox="0 0 20 20"><path d="M2 5h9v5H5M15 5v8M11 9h8M2 16l6-5M2 11l6 5M5 11v8" fill="none" stroke="#bbb" stroke-dasharray="3 1"/></symbol>
<symbol id="g43" viewBox="0 0 20 20"><rect x="3" y="3" width="14" height="14" fill="#eee" stroke="#bbb" stroke-dasharray="1.500 1"/><path d="M6 14L14 6M10 6h4v4" fill="none" stroke="#aaa" stroke-width="1.500"/></symbol>
<symbol id="g44" viewBox="0 0 20 20"><path d="M3 3c8 0 13 6 13 15" fill="none" stroke="#bbb"/><rect x="1" y="1" width="4" height="4" fill="#bbb"/><rect x="14" y="15" width="4" height="4" fill="#bbb"/><path d="M5 13h3M6.500 11.500v3" stroke="#bbb"/></symbol>
<symbol id="g45" viewBox="0 0 20 20"><path d="M1 10h9M15 2v16" stroke="#bbb"/><rect x="8" y="8" width="4" height="4" fill="#bbb"/><rect x="13" y="1" width="4" height="4" fill="#bbb"/><rect x="13" y="15" width="4" height="4" fill="#bbb"/></symbol>
<symbol id="g46" viewBox="0 0 20 20"><path d="M10 1v18M1 10h5M14 10h5" stroke="#bbb"/><rect x="8" y="1" width="4" height="4" fill="#bbb"/><rect x="8" y="15" width="4" height="4" fill="#bbb"/><rect x="13" y="8" width="3" height="3" fill="#bbb"/></symbol>
<symbol id="g47" viewBox="0 0 20 20"><path d="M1 18L19 4M14 2v16" stroke="#bbb"/><rect x="12" y="7" width="4" height="4" fill="#bbb"/></symbol>
<symbol id="g48" viewBox="0 0 20 20"><path d="M10 1v5M10 14v5M1 10h5M14 10h5M4 4l3 3M13 13l3 3M16 4l-3 3M7 13l-3 3" stroke="#bbb" stroke-width="2" stroke-dasharray="2 1.500"/></symbol>
<symbol id="g49" viewBox="0 0 20 20"><circle cx="10" cy="10" r="8.500" fill="#c9c9c9" stroke="#bbb"/><ellipse cx="7.500" cy="7" rx="3.500" ry="2.500" fill="#efefef"/></symbol>
<symbol id="g50" viewBox="0 0 20 20"><path d="M2 5h6l9-3v16l-9-3H2z" fill="#eee" stroke="#c2c2c2"/><path d="M6 10h7m-2-2l2 2-2 2M13 3v14" fill="none" stroke="#b0b0b0"/></symbol>
<symbol id="g51" viewBox="0 0 20 20"><path d="M2 9l9-7 7 6v10H2z" fill="#eee" stroke="#c2c2c2"/><path d="M6 13a4 4 0 018-2M14 13a4 4 0 01-8 2" fill="none" stroke="#aaa" stroke-width="1.500"/></symbol>
<symbol id="g52" viewBox="0 0 20 20"><path d="M3 3l14 14M3 7l4-4M13 17l4-4" stroke="#b0b0b0" stroke-width="3"/><path d="M14 3l3 3-11 11-3-3z" fill="#ccc" stroke="#aaa"/></symbol>
<symbol id="g53" viewBox="0 0 20 20"><rect x="3" y="3" width="14" height="14" fill="#e4e4e4" stroke="#bbb"/><path d="M3 10h14" stroke="#bbb"/><rect x="1" y="1" width="4" height="4" fill="#bbb"/><rect x="15" y="1" width="4" height="4" fill="#bbb"/><rect x="1" y="15" width="4" height="4" fill="#bbb"/><rect x="15" y="15" width="4" height="4" fill="#bbb"/></symbol>
<symbol id="g54" viewBox="0 0 20 20"><path d="M3 5h14v11H3zM3 10h14M10 5v11" fill="none" stroke="#aaa"/><circle cx="3" cy="5" r="2" fill="#ccc"/><circle cx="17" cy="5" r="2" fill="#ccc"/><circle cx="3" cy="16" r="2" fill="#ccc"/><circle cx="17" cy="16" r="2" fill="#ccc"/></symbol>
<symbol id="g55" viewBox="0 0 20 20"><path d="M2 3h10v5h6v10H8v-5H2z" fill="#eaeaea" stroke="#bbb" stroke-dasharray="2 .6"/></symbol>
<symbol id="g56" viewBox="0 0 20 20"><path d="M6 2h8l4 4v8l-4 4H6l-4-4V6z" fill="#ececec" stroke="#bbb" stroke-width="1.400" stroke-dasharray="2 .6"/></symbol>
<symbol id="g57" viewBox="0 0 20 20"><g fill="#ededed" stroke="#b8b8b8"><rect x="1.500" y="3" width="15" height="13" rx="2"/><circle cx="11" cy="10" r="6"/><path d="M8.500 10h5M11 7.500v5"/><path d="M15 14l4 4" stroke-width="2"/></g></symbol>
<symbol id="g58" viewBox="0 0 20 20"><g fill="#ededed" stroke="#b8b8b8"><rect x="1.500" y="3" width="15" height="13" rx="2"/><circle cx="11" cy="10" r="6"/><path d="M8.500 10h5"/><path d="M15 14l4 4" stroke-width="2"/></g></symbol>
<symbol id="g59" viewBox="0 0 20 20"><rect x="2" y="2" width="16" height="16" rx="2" fill="#eee" stroke="#bbb"/><path d="M10 3l3 3H7zM10 17l-3-3h6zM3 10l3-3v6zM17 10l-3 3V7z" fill="#c8c8c8" stroke="#b0b0b0"/></symbol>
<symbol id="g60" viewBox="0 0 20 20"><rect x="2" y="2" width="16" height="16" fill="#eee" stroke="#bbb"/><text x="10" y="14" text-anchor="middle" font-family="Liberation Sans" font-size="9" fill="#aaa">1:1</text></symbol>
<symbol id="g61" viewBox="0 0 20 20"><rect x="1.500" y="1.500" width="17" height="17" fill="#e9e9e9" stroke="#c2c2c2"/><path d="M9 9V4.500L4.500 9zM11 9V4.500L15.500 9zM9 11v4.500L4.500 11zM11 11v4.500l4.500-4.500z" fill="#aaa"/></symbol>
<symbol id="g62" viewBox="0 0 20 20"><rect x="1.500" y="1.500" width="17" height="17" fill="#e9e9e9" stroke="#c2c2c2"/><path d="M3 3h5L3 8zM17 3h-5l5 5zM3 17v-5l5 5zM17 17h-5l5-5z" fill="#aaa"/></symbol>
<symbol id="g63" viewBox="0 0 20 20"><rect x="1.500" y="2" width="17" height="16" fill="#eee" stroke="#c2c2c2"/><path d="M2 10l8-6v3h8v6h-8v3z" fill="#c8c8c8" stroke="#aaa"/></symbol>
<symbol id="g64" viewBox="0 0 20 20"><rect x="1.500" y="2" width="17" height="16" fill="#eee" stroke="#c2c2c2"/><path d="M18 10l-8-6v3H2v6h8v3z" fill="#c8c8c8" stroke="#aaa"/></symbol>
<symbol id="g65" viewBox="0 0 20 20"><rect x="2" y="3" width="16" height="14" fill="#dcdcdc" stroke="#b0b0b0"/><rect x="5" y="9" width="10" height="1.500" fill="#a8a8a8"/></symbol>
<symbol id="g66" viewBox="0 0 20 20"><rect x="2.500" y="2.500" width="15" height="15" fill="#eee" stroke="#bbb" stroke-dasharray="1.500 1"/><circle cx="10" cy="10" r="4" fill="#ccc"/></symbol>
<symbol id="tri" viewBox="0 0 20 20"><path d="M6 4l9 6-9 6z" fill="#c8c8c8" stroke="#bbb"/></symbol>
<symbol id="first" viewBox="0 0 20 20"><path d="M4 3v14" stroke="#bdbdbd" stroke-width="2.400"/><path d="M16 2v16L7 10z" fill="#cfcfcf" stroke="#bdbdbd"/></symbol>
<symbol id="prev" viewBox="0 0 20 20"><path d="M14 2v16L5 10z" fill="#cfcfcf" stroke="#bdbdbd"/></symbol>
<symbol id="next" viewBox="0 0 20 20"><path d="M6 2v16l9-8z" fill="#cfcfcf" stroke="#bdbdbd"/></symbol>
<symbol id="last" viewBox="0 0 20 20"><path d="M16 3v14" stroke="#bdbdbd" stroke-width="2.400"/><path d="M4 2v16l9-8z" fill="#cfcfcf" stroke="#bdbdbd"/></symbol>
<symbol id="tri2" viewBox="0 0 20 20"><path d="M3 2l8 5-8 5z" fill="#c8c8c8"/><text x="14" y="18" text-anchor="middle" font-family="Liberation Sans" font-weight="700" font-size="9" fill="#c0c0c0">A</text></symbol>
<!-- taskbar -->
<symbol id="tstart" viewBox="0 0 20 20"><path d="M1 3.500l7.500-1V9.500H1zM9.500 2.300L19 1v8.500H9.500zM1 10.500h7.500v7L1 16.500zM9.500 10.500H19V19l-9.500-1.300z" fill="#000"/></symbol>
<symbol id="tsearch" viewBox="0 0 20 20"><circle cx="12" cy="8" r="6" fill="none" stroke="#111" stroke-width="1.400"/><path d="M8 12.500L2 19" stroke="#111" stroke-width="1.600"/></symbol>
<symbol id="tedge" viewBox="0 0 20 20"><path d="M2 10C2 4 6 1 11 1c5 0 8 4 8 8 0 3-3 3-6 3H8c0 3 3 5 9 3-2 4-9 5-12 2-3-2-3-5-3-7z" fill="#1c86d8"/><path d="M8 12c0-3 2-4 4-4s3 1 3 3c-1 1-5 1-7 1z" fill="#59d070"/><path d="M2 10c1-4 6-6 9-4-3 0-5 2-5 7-2 0-4-1-4-3z" fill="#1259a8"/></symbol>
<symbol id="tfold" viewBox="0 0 20 20"><path d="M1 3h8l2 2H1z" fill="#e8a820"/><path d="M1 5h18v13H1z" fill="#f8d458"/><path d="M6 18v-6l4-2 4 2v6z" fill="#1f78d0"/><rect x="9" y="14" width="2" height="4" fill="#f8d458"/></symbol>
<symbol id="tnote" viewBox="0 0 20 20"><path d="M3 2h14v17H3z" fill="#bcdcf0" stroke="#6a7a80"/><path d="M5 6h10M5 9h10M5 12h10M5 15h10" stroke="#7aa8c8"/><path d="M3 1v3M6 1v3M9 1v3M12 1v3M15 1v3" stroke="#444"/></symbol>
<symbol id="tarc" viewBox="0 0 20 20"><circle cx="9" cy="9" r="8.500" fill="#0e4a80"/><circle cx="9" cy="9" r="5" fill="#8ed0ee"/><path d="M6 8c2-3 4-2 5 0s0 3-2 4-4-1-3-4z" fill="#3a9a4a"/><path d="M13 13l6 6" stroke="#c09030" stroke-width="3"/></symbol>
<symbol id="twc" viewBox="0 0 20 20"><ellipse cx="8" cy="8" rx="7.500" ry="6.500" fill="#27c227"/><path d="M3 13l0 3 3-2z" fill="#27c227"/><ellipse cx="14" cy="13" rx="5.500" ry="4.500" fill="#e8e8e8"/><circle cx="6" cy="7" r="1" fill="#0a6a0a"/><circle cx="10" cy="7" r="1" fill="#0a6a0a"/><circle cx="12.500" cy="12" r=".7" fill="#666"/><circle cx="15.500" cy="12" r=".7" fill="#666"/></symbol>
<symbol id="tup" viewBox="0 0 20 20"><path d="M3 13l7-7 7 7" fill="none" stroke="#111" stroke-width="1.500"/></symbol>
<symbol id="tusb" viewBox="0 0 20 20"><rect x="7" y="1" width="6" height="5" fill="#cfe3f2" stroke="#3a8ad0"/><rect x="5" y="6" width="10" height="13" rx="1" fill="#8fc4ee" stroke="#3a8ad0"/><path d="M10 8v7M8 11l2 2 2-2" fill="none" stroke="#fff"/></symbol>
<symbol id="tsh" viewBox="0 0 20 20"><path d="M10 1l8 3c0 7-2 12-8 15C4 16 2 11 2 4z" fill="#fff" stroke="#2546c8" stroke-width="1.600"/><path d="M5 6l5 3 5-3-5 8z" fill="#2a70e0"/></symbol>
<symbol id="tqq" viewBox="0 0 20 20"><ellipse cx="10" cy="7" rx="6" ry="6.500" fill="#111"/><ellipse cx="10" cy="14" rx="7" ry="5.500" fill="#111"/><ellipse cx="10" cy="14" rx="4.500" ry="4.500" fill="#fff"/><rect x="3" y="9" width="14" height="3" fill="#e81ca0"/><circle cx="14" cy="3" r="2.500" fill="#e81ca0"/><path d="M7 11h6l-3 2z" fill="#f0a020"/></symbol>
<symbol id="tbat" viewBox="0 0 20 20"><path d="M3 2v4M7 2v4M1 6h8v2M5 8v3" fill="none" stroke="#111" stroke-width="1.300"/><rect x="4" y="10" width="15" height="8" fill="#fff" stroke="#111"/><rect x="6" y="12" width="10" height="4" fill="#111"/></symbol>
<symbol id="tnet" viewBox="0 0 20 20"><rect x="6" y="3" width="13" height="11" fill="none" stroke="#111" stroke-width="1.200"/><rect x="1" y="2" width="7" height="8" fill="#dbe7ec" stroke="#111" stroke-width="1.200"/><path d="M12 14v4M8 18h8" stroke="#111" stroke-width="1.200"/></symbol>
<symbol id="tmute" viewBox="0 0 20 20"><path d="M2 8h3l5-5v14l-5-5H2z" fill="none" stroke="#111" stroke-width="1.200"/><path d="M13 8l5 5M18 8l-5 5" stroke="#111" stroke-width="1.300"/></symbol>
<symbol id="tpen" viewBox="0 0 20 20"><path d="M3 18c-1-3 2-5 5-8l6-7c2-2 4 0 2 3l-6 7c-2 2-4 3-4 1l5-8" fill="none" stroke="#111" stroke-width="1.300"/></symbol>
<symbol id="sogou" viewBox="0 0 27 36"><path d="M3 3L25 0l2 30-23 6-4-6z" fill="#f05a22"/><path d="M21 9c-5-3-13-2-12 3 1 4 10 2 9 7-1 4-8 4-13 1" fill="none" stroke="#fff" stroke-width="5"/></symbol>
<symbol id="tsog" viewBox="0 0 20 20"><rect x="1" y="1" width="18" height="18" rx="2" fill="#f05a22"/><path d="M15 6c-4-2-9-1-8 2 1 3 7 1 6 5-1 2-5 2-8 0" fill="none" stroke="#fff" stroke-width="2.600"/></symbol>
<symbol id="bsmile" viewBox="0 0 20 20"><circle cx="10" cy="10" r="9" fill="#0f7ae5"/><circle cx="7" cy="8" r="1.300" fill="#fff"/><circle cx="13" cy="8" r="1.300" fill="#fff"/><path d="M6 12c2 3 6 3 8 0" fill="none" stroke="#fff" stroke-width="1.500"/></symbol>
<symbol id="bmic" viewBox="0 0 20 20"><rect x="7" y="1" width="6" height="11" rx="3" fill="#0f7ae5"/><path d="M4 9c0 8 12 8 12 0M10 15v4" fill="none" stroke="#0f7ae5" stroke-width="1.500"/></symbol>
<symbol id="bkey" viewBox="0 0 20 20"><rect x="1" y="3" width="18" height="14" rx="2" fill="#0f7ae5"/><path d="M4 7h1.500M7 7h1.500M10 7h1.500M13 7h1.500M4 10h1.500M7 10h1.500M10 10h1.500M13 10h1.500M6 14h8" stroke="#fff" stroke-width="1.500"/></symbol>
<symbol id="buser" viewBox="0 0 20 20"><circle cx="10" cy="6" r="4.500" fill="#c8c8c8"/><path d="M2 19c0-6 4-7 8-7s8 1 8 7z" fill="#c8c8c8"/></symbol>
<symbol id="bshirt" viewBox="0 0 20 20"><path d="M6 2h8l5 4-3 4-1-1v9H5V9l-1 1-3-4z" fill="#0f7ae5"/></symbol>
<symbol id="bgrid" viewBox="0 0 20 20"><rect x="2" y="2" width="7" height="7" rx="2" fill="#0f7ae5"/><rect x="11" y="2" width="7" height="7" rx="2" fill="#0f7ae5"/><rect x="2" y="11" width="7" height="7" rx="2" fill="#0f7ae5"/><rect x="11" y="11" width="7" height="7" rx="2" fill="#0f7ae5"/></symbol>
</svg>

<div class="app">
  <header class="title">
    <svg class="ti"><use href="#tarc"/></svg>
    <span class="ttext">无标题 - ArcMap</span>
    <span class="wbtns">
      <svg class="wb" viewBox="0 0 46 20"><path d="M18 10h10" stroke="#000"/></svg>
      <svg class="wb" viewBox="0 0 46 20"><path d="M18.500 7.500h7v8h-7zM21 7.500V5h7v8h-2.500" fill="none" stroke="#000"/></svg>
      <svg class="wb" viewBox="0 0 46 20"><path d="M18 5l10 10M28 5L18 15" stroke="#000"/></svg>
    </span>
  </header>
  <nav class="menubar">
    <span class="mi m-file">File</span><span class="mi m-edit">Edit</span><span class="mi m-view">View</span><span class="mi m-book">Bookmarks</span><span class="mi m-ins">Insert</span><span class="mi m-sel">Selection</span><span class="mi m-geo">Geoprocessing</span><span class="mi m-cus">Customize</span><span class="mi m-win">Windows</span><span class="mi">Help</span>
  </nav>

  <div class="tools">
    <div class="row r1">
      <div class="tb ml3"><i class="g"></i>
        <svg class="b"><use href="#new"/></svg><svg class="b"><use href="#open"/></svg><svg class="b"><use href="#save"/></svg><svg class="b"><use href="#print"/></svg><i class="n"></i>
        <svg class="b"><use href="#g1"/></svg><svg class="b"><use href="#g2"/></svg><svg class="b"><use href="#paste"/></svg><svg class="b"><use href="#g3"/></svg><i class="n"></i>
        <svg class="b"><use href="#g4"/></svg><svg class="b"><use href="#g5"/></svg><i class="n"></i>
        <svg class="b"><use href="#add"/></svg><i class="d"></i><i class="n"></i>
        <span class="combo w147 ml3"><span class="cv"></span></span><i class="n"></i>
        <svg class="b on ml2"><use href="#edit"/></svg><i class="s"></i>
        <svg class="b"><use href="#wtoc"/></svg><svg class="b"><use href="#wcat"/></svg><svg class="b"><use href="#wsearch"/></svg><svg class="b"><use href="#wbox"/></svg><svg class="b"><use href="#wpy"/></svg><i class="s"></i>
        <svg class="b"><use href="#model"/></svg><i class="h ml2"></i>
      </div>
      <div class="tb ml3"><i class="g"></i>
        <svg class="b"><use href="#mprop"/></svg><svg class="b"><use href="#g2"/></svg><svg class="b"><use href="#g23"/></svg><i class="n"></i>
        <svg class="b"><use href="#first"/></svg><svg class="b"><use href="#prev"/></svg>
        <span class="combo w124 ml1"><span class="cv mono">Show Name</span></span>
        <svg class="b"><use href="#next"/></svg><svg class="b"><use href="#last"/></svg><i class="s"></i>
        <span class="l w58 ml4">Page Text</span><i class="d"></i><i class="h ml2"></i>
      </div>
      <div class="tb ml3"><i class="g"></i>
        <span class="l w108 ml4">Spatial Adjustment</span><i class="d"></i><i class="n"></i>
        <svg class="b ml1"><use href="#arrow"/></svg><svg class="b"><use href="#g26"/></svg><svg class="b"><use href="#g28"/></svg><svg class="b"><use href="#g33"/></svg><i class="n"></i>
        <svg class="b"><use href="#g40"/></svg><svg class="b"><use href="#g40"/></svg><svg class="b"><use href="#g41"/></svg><i class="s"></i>
        <svg class="b"><use href="#g30"/></svg><i class="s"></i><svg class="b"><use href="#g42"/></svg><i class="s"></i><svg class="b"><use href="#g42"/></svg><i class="h ml3"></i>
      </div>
      <div class="tb ml3"><i class="g"></i>
        <span class="l w48 ml4">Labeling</span><i class="d"></i>
        <svg class="b ml1"><use href="#lb1"/></svg><svg class="b"><use href="#lb2"/></svg><svg class="b"><use href="#lb3"/></svg><svg class="b"><use href="#lb4"/></svg><svg class="b"><use href="#lb5"/></svg><svg class="b"><use href="#lb6"/></svg><i class="n"></i>
        <span class="combo w66 ml1 dis"><span class="cv2">Fast</span></span><i class="h ml2"></i>
      </div>
      <div class="tb ml4"><i class="g g6"></i>
        <svg class="b bn"><use href="#warn"/></svg><i class="h ml1"></i>
      </div>
    </div>

    <div class="row r2">
      <div class="tb ml3"><i class="g g6"></i>
        <svg class="b"><use href="#zin"/></svg><svg class="b"><use href="#zout"/></svg><svg class="b on ml1"><use href="#hand"/></svg><svg class="b"><use href="#globe"/></svg><i class="s"></i>
        <svg class="b"><use href="#fzin"/></svg><svg class="b"><use href="#fzout"/></svg><i class="n"></i>
        <svg class="b ml3"><use href="#g6"/></svg><svg class="b"><use href="#g7"/></svg><i class="n"></i>
        <svg class="b"><use href="#g8"/></svg><i class="d gd d9"></i><svg class="b ml1"><use href="#g9"/></svg><i class="n"></i>
        <svg class="b ml2"><use href="#arrow"/></svg><i class="n"></i>
        <svg class="b"><use href="#info"/></svg><svg class="b"><use href="#g10"/></svg><svg class="b"><use href="#g11"/></svg><i class="n"></i>
        <svg class="b ml1"><use href="#g12"/></svg><i class="n"></i>
        <svg class="b"><use href="#binoc"/></svg><svg class="b ml2"><use href="#route"/></svg><svg class="b"><use href="#xy"/></svg><i class="n"></i>
        <svg class="b"><use href="#g13"/></svg><i class="n"></i>
        <svg class="b ml1"><use href="#viewer"/></svg><i class="h ml2"></i>
      </div>
      <div class="tb ml4"><i class="g"></i>
        <span class="l w37 ml3">Editor</span><i class="d"></i><i class="n"></i>
        <svg class="b"><use href="#tri"/></svg><svg class="b"><use href="#tri2"/></svg><i class="s"></i>
        <svg class="b"><use href="#g14"/></svg><svg class="b"><use href="#g15"/></svg><svg class="b ml1"><use href="#g16"/></svg><i class="d gd dn"></i>
        <svg class="b"><use href="#g17"/></svg><i class="n"></i>
        <svg class="b"><use href="#g18"/></svg><svg class="b"><use href="#g19"/></svg><svg class="b ml1"><use href="#g20"/></svg><svg class="b"><use href="#g21"/></svg><svg class="b ml-2"><use href="#g22"/></svg><i class="n"></i>
        <svg class="b ml2"><use href="#g23"/></svg><svg class="b"><use href="#g24"/></svg><i class="n"></i>
        <svg class="b ml1"><use href="#g25"/></svg><svg class="b"><use href="#man"/></svg><i class="h ml2"></i>
      </div>
      <div class="tb ml3"><i class="g"></i>
        <span class="l w48 ml4">Drawing</span><i class="d"></i>
        <svg class="b"><use href="#arrow"/></svg><svg class="b"><use href="#circ"/></svg><svg class="b"><use href="#g2"/></svg><i class="n"></i>
        <svg class="b"><use href="#rect"/></svg><i class="d"></i><svg class="b ml1"><use href="#call"/></svg><svg class="b"><use href="#bigA"/></svg><i class="d dn"></i>
        <svg class="b ml1"><use href="#g16"/></svg><i class="n"></i>
        <span class="combo font ml1"><svg class="oi"><use href="#oicon"/></svg><span class="cjk">宋体</span></span>
        <span class="combo fsize ml1"><span class="szv">10</span></span>
        <span class="fb fbb">B</span><span class="fb fbi">I</span><span class="fb fbu">U</span><i class="n"></i>
        <svg class="b ml2"><use href="#fcA"/></svg><i class="d dn ml3"></i><svg class="b ml4"><use href="#fcB"/></svg><i class="d dn ml2"></i><svg class="b ml4"><use href="#fcP"/></svg><i class="d dn ml2"></i><svg class="b ml3"><use href="#fcM"/></svg><i class="d dn ml3"></i><i class="h ml4"></i>
      </div>
    </div>

    <div class="row r3">
      <div class="tb ml3"><i class="g g6"></i>
        <svg class="b ml1"><use href="#g57"/></svg><svg class="b"><use href="#g58"/></svg><svg class="b"><use href="#hand2"/></svg><svg class="b"><use href="#g59"/></svg><svg class="b"><use href="#g60"/></svg><i class="n"></i>
        <svg class="b ml1"><use href="#g61"/></svg><svg class="b"><use href="#g62"/></svg><i class="n"></i>
        <svg class="b ml1"><use href="#g63"/></svg><svg class="b"><use href="#g64"/></svg>
        <span class="combo w60 dimc"><span class="cv3">100%</span></span><i class="n"></i>
        <svg class="b on2"><use href="#g65"/></svg><svg class="b"><use href="#g66"/></svg><svg class="b ml1"><use href="#lockp"/></svg><svg class="b on"><use href="#layout"/></svg><i class="h ml2"></i>
      </div>
      <div class="tb ml3"><i class="g g6"></i>
        <span class="l w90 ml6">Georeferencing</span><i class="d dn"></i><i class="n"></i>
        <span class="combo w180 ml2 dis flat"></span>
        <svg class="b ml-1"><use href="#g26"/></svg><svg class="b ml1"><use href="#g27"/></svg><svg class="b"><use href="#g28"/></svg><svg class="b"><use href="#g28"/></svg><svg class="b"><use href="#g28"/></svg><svg class="b"><use href="#g29"/></svg><svg class="b"><use href="#g30"/></svg>
        <svg class="b ml-1"><use href="#g31"/></svg><i class="d gd dn"></i>
        <span class="inbox ml4"></span><i class="h ml6"></i>
      </div>
      <div class="tb ml3"><i class="g"></i>
        <svg class="b ml1"><use href="#g32"/></svg><i class="n ml-1"></i>
        <svg class="b ml-2"><use href="#g33"/></svg><i class="d gd dn"></i><i class="s ml2"></i>
        <svg class="b"><use href="#g33"/></svg><svg class="b ml-1"><use href="#g33"/></svg><svg class="b"><use href="#g34"/></svg><svg class="b ml1"><use href="#g35"/></svg><i class="s"></i>
        <svg class="b"><use href="#g53"/></svg><i class="s"></i>
        <svg class="b"><use href="#g36"/></svg><svg class="b"><use href="#g37"/></svg><i class="s"></i>
        <svg class="b"><use href="#g38"/></svg><svg class="b"><use href="#g39"/></svg><i class="h ml1"></i>
      </div>
      <div class="tb ml4"><i class="g g6"></i>
        <svg class="b ml1"><use href="#g43"/></svg><svg class="b ml1"><use href="#g44"/></svg><svg class="b ml-2"><use href="#g45"/></svg><svg class="b ml1"><use href="#g46"/></svg><svg class="b"><use href="#g47"/></svg><i class="n"></i>
        <svg class="b ml1"><use href="#g48"/></svg><svg class="b"><use href="#g49"/></svg><i class="n"></i>
        <svg class="b"><use href="#g50"/></svg><svg class="b ml1"><use href="#g51"/></svg><svg class="b"><use href="#g52"/></svg><svg class="b"><use href="#g53"/></svg><svg class="b"><use href="#g54"/></svg><i class="n"></i>
        <svg class="b ml1"><use href="#g55"/></svg><svg class="b"><use href="#g56"/></svg><i class="h ml2"></i>
      </div>
    </div>

    <div class="row r4">
      <div class="tb light ml13"><i class="g g7"></i>
        <svg class="b"><use href="#power"/></svg><i class="n"></i>
        <span class="l cn w36 ml6">天地图</span><i class="d"></i>
        <span class="l w48 ml6">MapBox</span><i class="d"></i>
        <span class="l cn w48 ml5">星图地球</span><i class="d"></i>
        <svg class="b"><use href="#bdb"/></svg><i class="n"></i>
        <svg class="b ml1"><use href="#gear"/></svg><i class="n"></i>
        <svg class="b ml1"><use href="#infoo"/></svg><i class="h ml2"></i>
      </div>
      <div class="tb light ml10"><i class="g"></i>
        <span class="l cn w48 ml4">谷歌地图</span><i class="d"></i><i class="n"></i>
        <span class="l cn w48 ml6">高德地图</span><i class="d dn"></i>
        <span class="l cn w36 ml6">天地图</span><i class="d dn"></i>
        <span class="l cn w48 ml6">搜搜地图</span><i class="d"></i><i class="n"></i>
        <span class="l cn w48 ml6">必应地图</span><i class="d dn"></i>
        <span class="l cn w48 ml6">其它地图</span><i class="d dn"></i><i class="n"></i>
        <span class="tilec ml3"><span class="cn tiletx">切片图层列表</span><span class="tilea"><i class="d dk"></i></span></span>
        <svg class="b ml1"><use href="#tile"/></svg><i class="n"></i>
        <span class="l cn w33 ml7">选项...</span><i class="d"></i><i class="n"></i>
        <span class="l cn w53 ml5">用户/注册</span>
        <svg class="b ml4"><use href="#info"/></svg><i class="h ml2"></i>
      </div>
    </div>
  </div>

  <main class="main">
    <section class="toc">
      <div class="phead toch"><span>Table Of Contents</span><svg class="pi"><use href="#pin"/></svg><svg class="pi"><use href="#close"/></svg></div>
      <div class="pbar tocb">
        <svg class="b on ml4"><use href="#tocdraw"/></svg><svg class="b"><use href="#tocdb"/></svg><svg class="b"><use href="#toclay"/></svg><svg class="b"><use href="#tocsrc"/></svg><i class="n"></i><svg class="b ml2"><use href="#clist"/></svg>
      </div>
      <div class="toctree">
        <div class="layer"><svg class="li"><use href="#layers"/></svg><span class="lsel">Layers</span></div>
      </div>
    </section>

    <section class="mapcol">
      <div class="mapbox"></div>
      <div class="mapbar">
        <svg class="mb act" viewBox="0 0 16 16"><rect x="4" y="2" width="9" height="12" fill="#8dbb6a" stroke="#222"/><path d="M5 12l7-8" stroke="#e8d05a"/></svg>
        <svg class="mb" viewBox="0 0 16 16"><rect x="3" y="2" width="10" height="12" fill="#fff" stroke="#222"/><path d="M5 6h6M5 9h6" stroke="#222"/></svg>
        <i class="n"></i>
        <svg class="mb ml4" viewBox="0 0 16 16"><path d="M3 7a5 5 0 019-2l1-1v4H9l1.500-1.500A3 3 0 005 7zM13 9a5 5 0 01-9 2l-1 1V8h4l-1.500 1.500A3 3 0 0011 9z" fill="#1f6fb8"/></svg>
        <svg class="mb ml1" viewBox="0 0 16 16"><rect x="4" y="3" width="3" height="10" fill="#2a5fa8"/><rect x="9" y="3" width="3" height="10" fill="#2a5fa8"/></svg>
        <span class="sbarrow ml1">‹</span>
        <span class="track"></span>
        <span class="sbarrow sbr">›</span>
      </div>
    </section>

    <div class="vsb"><span class="va">‹</span><span class="vt"></span><span class="va vd">‹</span></div>

    <section class="cat">
      <div class="phead cath"><span>Catalog</span><svg class="pi"><use href="#pin"/></svg><svg class="pi"><use href="#close"/></svg></div>
      <div class="pbar catb">
        <svg class="b ml4"><use href="#cback"/></svg><i class="d dk2"></i><svg class="b ml3"><use href="#cfwd"/></svg><svg class="b ml1"><use href="#cup"/></svg><svg class="b ml1"><use href="#chome"/></svg><svg class="b ml2"><use href="#cdbh"/></svg><i class="n"></i>
        <svg class="b ml4"><use href="#cgrid"/></svg><i class="d gd ml3"></i><i class="n ml2"></i>
        <svg class="b ml4"><use href="#cfold"/></svg><i class="n"></i>
        <svg class="b ml4"><use href="#ctree"/></svg><i class="n"></i>
        <svg class="b ml3"><use href="#clist"/></svg>
      </div>
      <div class="loc"><span class="loct">Location:</span><span class="locv"><svg class="fi"><use href="#fold"/></svg><span>F:\</span></span></div>
      <div class="tree">
        <div class="rows">
          <div class="tr lv1"><i class="ex"></i><svg class="fi"><use href="#fhome"/></svg><span>Home - Documents\ArcGIS</span></div>
          <div class="tr lv1"><i class="ex minus"></i><svg class="fi"><use href="#fconn"/></svg><span>Folder Connections</span></div>
          <div class="tr lv2"><i class="ex"></i><svg class="fi"><use href="#fold"/></svg><span>C:\Users\Lynn_Wm</span></div>
          <div class="tr lv2"><i class="ex"></i><svg class="fi"><use href="#fold"/></svg><span>D:\</span></div>
          <div class="tr lv2"><i class="ex"></i><svg class="fi"><use href="#fold"/></svg><span>D:\360MoveData\Users\Lynn_Wm\Desktop</span></div>
          <div class="tr lv2"><i class="ex"></i><svg class="fi"><use href="#fold"/></svg><span>D:\company</span></div>
          <div class="tr lv2"><i class="ex"></i><svg class="fi"><use href="#fold"/></svg><span>E:\2023</span></div>
          <div class="tr lv2"><i class="ex"></i><svg class="fi"><use href="#fold"/></svg><span>E:\20230322</span></div>
          <div class="tr lv2"><i class="ex"></i><svg class="fi"><use href="#fold"/></svg><span class="trsel">F:\</span></div>
          <div class="tr lv2"><i class="ex"></i><svg class="fi"><use href="#fold"/></svg></div>
          <div class="tr lv2"><i class="ex"></i><svg class="fi"><use href="#fold"/></svg></div>
          <div class="tr lv1"><i class="ex"></i><svg class="fi"><use href="#fbox"/></svg><span>Toolboxes</span></div>
          <div class="tr lv1"><i class="ex"></i><svg class="fi"><use href="#fdb"/></svg><span>Database Servers</span></div>
          <div class="tr lv1"><i class="ex"></i><svg class="fi"><use href="#fdbs"/></svg><span>Database Connections</span></div>
          <div class="tr lv1"><i class="ex"></i><svg class="fi"><use href="#fgis"/></svg><span>GIS Servers</span></div>
          <div class="tr lv1"><i class="ex"></i><svg class="fi"><use href="#fconn"/></svg><span>My Hosted Services</span></div>
        </div>
        <div class="hsb"><span class="ha">‹</span><span class="ht"></span><span class="ha">›</span></div>
      </div>
      <div class="tabs">
        <span class="tab tab1"><svg class="tabi"><use href="#wbox"/></svg>ArcToolbox</span>
        <span class="tab tab2"><svg class="tabi"><use href="#wcat"/></svg><span class="dot">Catalog</span></span>
        <span class="tab tab3"><svg class="tabi"><use href="#g25c"/></svg>Create Features</span>
      </div>
    </section>
  </main>

  <div class="status"><span class="stc">122</span></div>

  <footer class="task">
    <span class="tk tk36"><svg class="ts"><use href="#tstart"/></svg></span>
    <span class="tk tk36"><svg class="ts"><use href="#tsearch"/></svg></span>
    <span class="tk tk37 run ml3"><svg class="ts"><use href="#tedge"/></svg></span>
    <span class="tk tk37 run"><svg class="ts"><use href="#tfold"/></svg></span>
    <span class="tk tk37 run"><svg class="ts"><use href="#tnote"/></svg></span>
    <span class="tk tk37 run active"><svg class="ts"><use href="#tarc"/></svg></span>
    <span class="tk tk37 run"><svg class="ts"><use href="#twc"/></svg></span>
    <span class="tray">
      <span class="tk tk32"><svg class="ty"><use href="#tup"/></svg></span>
      <span class="tk tk32"><svg class="ty"><use href="#tusb"/></svg></span>
      <span class="tk tk32"><svg class="ty"><use href="#tsh"/></svg></span>
      <span class="tk tk32"><svg class="ty"><use href="#twc"/></svg></span>
      <span class="tk tk32"><svg class="ty"><use href="#tqq"/></svg></span>
      <span class="tk tk32"><svg class="ty"><use href="#tbat"/></svg></span>
      <span class="tk tk32"><svg class="ty"><use href="#tnet"/></svg></span>
      <span class="tk tk32"><svg class="ty"><use href="#tmute"/></svg></span>
      <span class="tk tk32"><svg class="ty"><use href="#tpen"/></svg></span>
      <span class="tk tk22 cn ime">英</span>
      <span class="tk tk28"><svg class="ty"><use href="#tsog"/></svg></span>
      <span class="clock">17:30</span>
      <svg class="notif" viewBox="0 0 16 18"><path d="M0 0h16v13H10l-2 3-2-3H0z" fill="#111"/><path d="M4 4h8M4 7h8M4 10h5" stroke="#ddd"/></svg>
    </span>
  </footer>

  <!-- overlays -->
  <div class="menu m1">
    <div class="it"><svg class="mic"><use href="#mcopy"/></svg>Copy</div>
    <div class="it off"><svg class="mic"><use href="#mpaste"/></svg>Paste</div>
    <div class="it"><span class="mic"></span>Rename</div>
    <div class="it"><svg class="mic"><use href="#mdisc"/></svg>Disconnect Folder</div>
    <div class="it"><svg class="mic"><use href="#mref"/></svg>Refresh</div>
    <div class="sep"></div>
    <div class="it sel"><span class="mic"></span>New<i class="sub"></i></div>
    <div class="sep"></div>
    <div class="it"><svg class="mic"><use href="#mdesc"/></svg>Item Description...</div>
    <div class="sep"></div>
    <div class="it"><svg class="mic"><use href="#mprop"/></svg>Properties...</div>
  </div>
  <div class="menu m2">
    <div class="it"><svg class="mic"><use href="#mfold"/></svg>Folder</div>
    <div class="it"><svg class="mic"><use href="#mdb"/></svg>File Geodatabase</div>
    <div class="it"><svg class="mic"><use href="#mdb"/></svg>Personal Geodatabase</div>
    <div class="sep"></div>
    <div class="it"><svg class="mic"><use href="#msrv"/></svg>Database Connection...</div>
    <div class="it"><svg class="mic"><use href="#marc"/></svg>ArcGIS Server Connection...</div>
    <div class="sep"></div>
    <div class="it"><svg class="mic"><use href="#mdia"/></svg>Layer...</div>
    <div class="it"><svg class="mic"><use href="#mgrp"/></svg>Group Layer</div>
    <div class="sep"></div>
    <div class="it"><svg class="mic"><use href="#mpy"/></svg>Python Toolbox</div>
    <div class="it"><svg class="mic"><use href="#mshp"/></svg>Shapefile...</div>
    <div class="it"><svg class="mic"><use href="#mturn"/></svg>Turn Feature Class...</div>
    <div class="it sel"><svg class="mic"><use href="#mbox"/></svg>Toolbox</div>
    <div class="it"><svg class="mic"><use href="#mdbf"/></svg>dBASE Table</div>
    <div class="it"><svg class="mic"><use href="#mlas"/></svg>LAS Dataset</div>
    <div class="it"><svg class="mic"><use href="#mloc"/></svg>Address Locator...</div>
    <div class="it"><svg class="mic"><use href="#mloc"/></svg>Composite Address Locator...</div>
    <div class="sep"></div>
    <div class="it"><svg class="mic"><use href="#mxml"/></svg>XML Document</div>
  </div>
  <div class="tip"><div class="tipt">New Toolbox</div><div class="tipb">Create a new geoprocessing toolbox.</div></div>
  <div class="ime-bar">
    <svg class="ime-s"><use href="#sogou"/></svg>
    <span class="ig cn ig1">英</span><span class="ig ig2">&#8217;,</span>
    <svg class="ib"><use href="#bsmile"/></svg><svg class="ib"><use href="#bmic"/></svg><svg class="ib"><use href="#bkey"/></svg><svg class="ib"><use href="#buser"/></svg><svg class="ib"><use href="#bshirt"/></svg><svg class="ib"><use href="#bgrid"/></svg>
  </div>
  <div class="meter"><span class="mt"></span></div>
  <div class="wm">CSDN @Lynn_ML</div>
</div>
</body>
</html>
```
FILE: styles.css
```css
* { box-sizing: border-box; }
html, body { margin: 0; padding: 0; }
body { font-family: "Noto Sans", "Noto Sans CJK SC", sans-serif; font-size: 12.5px; color: #10202f; background: #fff; overflow: hidden; }
.defs { display: none; }
i { display: block; font-style: normal; flex: none; }
.app { position: relative; width: 1920px; height: 1080px; display: flex; flex-direction: column; overflow: hidden; }

/* title */
.title { height: 23px; display: flex; align-items: center; background: #fff; padding: 0 0 2px 1px; flex: none; }
.ti { width: 18px; height: 18px; }
.ttext { margin-left: 3px; font-size: 13px; color: #222; }
.wbtns { margin-left: auto; display: flex; margin-right: 2px; }
.wb { width: 46px; height: 20px; }

/* menu */
.menubar { height: 27px; background: #f3f3f3; display: flex; align-items: center; padding-left: 12px; flex: none; font-size: 12.500px; }
.mi { display: block; }
.m-file { width: 35px; } .m-edit { width: 38px; } .m-view { width: 44px; } .m-book { width: 82px; } .m-ins { width: 49px; } .m-sel { width: 68px; } .m-geo { width: 104px; } .m-cus { width: 76px; } .m-win { width: 70px; }

/* toolbars */
.tools { height: 111px; background: #f8f8f8; flex: none; padding-top: 1px; }
.row { display: flex; }
.r1 { height: 28px; margin-bottom: 1px; } .r2 { height: 26px; margin-bottom: 1px; } .r3 { height: 26px; margin-bottom: 1px; } .r4 { height: 25px; }
.tb { display: flex; align-items: center; height: 100%; background: linear-gradient(#fafafa, #efefef); border-radius: 3px 0 0 3px; flex: none; }
.tb.light { background: linear-gradient(#fdfdfd, #f6f6f6); }
.g { width: 8px; height: 18px; background: repeating-linear-gradient(#b5b5b5 0 2px, transparent 2px 4px) 3px 0 / 2px 100% no-repeat; }
.g6 { width: 6px; background-position: 2px 0; }
.g7 { width: 7px; background-position: 3px 0; }
.b { display: block; width: 22px; height: 22px; padding: 1px; flex: none; }
.bn { margin-left: -2px; }
.on { background: #e8f2fb; border: 1px solid #0078d7; padding: 0; }
.on2 { background: #d9e4ee; border: 1px solid #a8bccd; padding: 0; }
.n, .s { height: 20px; background: linear-gradient(#bfbfbf, #bfbfbf) 2px 0 / 1px 100% no-repeat; }
.n { width: 5px; } .s { width: 6px; }
.d { width: 11px; height: 10px; position: relative; }
.d::after { content: ""; position: absolute; left: 2px; top: 4px; border-left: 3.500px solid transparent; border-right: 3.500px solid transparent; border-top: 3.500px solid #111; }
.dn { width: 10px; }
.d9 { width: 9px; }
.gd::after { border-top-color: #aaa; }
.dk2 { width: 13px; }
.dk::after { border-top-color: #000; left: 0; border-left-width: 4.500px; border-right-width: 4.500px; border-top-width: 4.500px; }
.h { width: 11px; height: 100%; background: linear-gradient(#efefef, #9f9f9f); position: relative; flex: none; }
.h::after { content: ""; position: absolute; left: 2px; bottom: 6px; width: 0; height: 0; border-left: 3.500px solid transparent; border-right: 3.500px solid transparent; border-top: 4px solid #000; box-shadow: 0 -2px 0 -0px #000; }
.l { display: block; white-space: nowrap; flex: none; line-height: 22px; }
.cn { font-family: "Noto Sans CJK SC", "Noto Sans", sans-serif; font-size: 12px; }
.ml-1 { margin-left: -1px; } .ml-2 { margin-left: -2px; } .ml1 { margin-left: 1px; } .ml2 { margin-left: 2px; } .ml3 { margin-left: 3px; } .ml4 { margin-left: 4px; } .ml5 { margin-left: 5px; } .ml6 { margin-left: 6px; } .ml7 { margin-left: 7px; } .ml10 { margin-left: 10px; } .ml13 { margin-left: 13px; }
.w33 { width: 33px; } .w36 { width: 36px; } .w37 { width: 37px; } .w48 { width: 48px; } .w53 { width: 53px; } .w58 { width: 58px; } .w60 { width: 60px; } .w66 { width: 66px; } .w90 { width: 90px; } .w108 { width: 108px; } .w124 { width: 124px; } .w147 { width: 147px; } .w180 { width: 180px; }
.combo { display: flex; align-items: center; height: 20px; background: #fff; border: 1px solid #c8c8c8; position: relative; flex: none; padding: 2px; font-size: 12px; }
.combo::after { content: ""; position: absolute; right: 6px; top: 4px; width: 6px; height: 6px; border-right: 1px solid #aaa; border-bottom: 1px solid #aaa; transform: rotate(45deg); }
.cv { display: block; height: 14px; width: calc(100% - 20px); background: #f0f0f0; font-size: 11px; line-height: 14px; color: #777; padding-left: 1px; }
.mono { font-family: "Liberation Mono", monospace; font-size: 10.500px; padding-left: 0; }
.cv3 { display: block; height: 14px; width: 36px; background: #efefef; color: #999; font-size: 12px; line-height: 14px; }
.dimc { height: 20px; }
.dis { background: #c8c8c8; border-color: #bbb; }
.flat { height: 22px; }
.cv2 { color: #8a8a8a; padding-left: 3px; }
.inbox { display: block; width: 74px; height: 16px; background: #fff; border: 1px solid #666; }
.font { width: 171px; height: 20px; border: 1px solid #666; padding: 0 0 0 3px; color: #000; }
.font::after, .fsize::after { border-color: #555; }
.oi { width: 17px; height: 17px; margin-right: 3px; }
.cjk { font-family: "Noto Sans CJK SC", sans-serif; font-size: 12px; }
.fsize { width: 45px; height: 20px; border: 1px solid #666; padding: 0 0 0 2px; color: #111; }
.szv { font-family: "Liberation Sans", sans-serif; font-size: 12px; }
.fb { display: block; width: 22px; text-align: center; font-family: "Liberation Serif", serif; font-size: 14px; color: #111; flex: none; }
.fbb { font-weight: 700; } .fbi { font-style: italic; font-weight: 700; } .fbu { text-decoration: underline; font-weight: 700; }
.tilec { display: flex; width: 173px; height: 22px; background: #fff; flex: none; align-items: center; }
.tiletx { flex: 1; color: #8a7a6a; padding-left: 2px; font-size: 13px; letter-spacing: 0; }
.tilea { width: 12px; height: 22px; background: #f2f2f2; display: block; padding-top: 7px; }

/* main */
.main { height: 867px; display: flex; background: #f6f6f6; flex: none; }
.toc { width: 342px; display: flex; flex-direction: column; flex: none; }
.phead { height: 22px; display: flex; align-items: center; padding-left: 3px; flex: none; color: #22303f; margin-bottom: 1px; }
.phead span { flex: 1; font-size: 12.500px; }
.toch { background: #cfdce9; }
.cath { background: linear-gradient(90deg, #9db6d3, #b9d0e8); }
.pi { width: 12px; height: 12px; margin-right: 3px; }
.pbar { height: 24px; display: flex; align-items: center; flex: none; }
.tocb { background: #f5f5f5; }
.toctree { flex: 1; background: #fff; border: 1px solid #808080; border-top-width: 2px; margin-right: 1px; padding: 0 0 0 22px; margin-top: 1px; }
.layer { display: flex; align-items: center; height: 21px; }
.li { width: 18px; height: 18px; flex: none; }
.lsel { display: block; margin-left: 2px; background: #0a6ed1; color: #fff; font-weight: 700; width: 43px; height: 21px; line-height: 21px; text-align: center; font-size: 12px; }
.mapcol { width: 1237px; margin-left: 5px; display: flex; flex-direction: column; flex: none; height: 865px; }
.mapbox { height: 849px; background: #fff; border-top: 2px solid #7f7f7f; border-left: 2px solid #666; flex: none; }
.mapbar { height: 14px; display: flex; align-items: center; background: #f2f2f2; margin-top: 2px; flex: none; border-left: 2px solid #888; }
.mb { width: 16px; height: 14px; display: block; flex: none; }
.mb.act { background: #c5daf0; }
.sbarrow { display: block; width: 17px; text-align: center; font-size: 20px; line-height: 13px; color: #444; font-weight: 700; flex: none; height: 14px; font-family: "Liberation Sans", sans-serif; }
.sbr { width: 19px; }
.track { flex: 1; height: 14px; background: #ccc; display: block; }
.vsb { width: 14px; height: 849px; display: flex; flex-direction: column; background: #fff; flex: none; }
.va { display: block; height: 19px; text-align: center; font-size: 18px; line-height: 19px; font-weight: 700; color: #444; transform: rotate(90deg); font-family: "Liberation Sans", sans-serif; flex: none; }
.vd { transform: rotate(-90deg); }
.vt { flex: 1; background: #ccc; display: block; }
.cat { width: 315px; margin-left: 7px; display: flex; flex-direction: column; flex: none; }
.catb { background: #fbfbfb; height: 24px; }
.loc { height: 25px; display: flex; align-items: center; flex: none; background: #f6f6f6; padding: 0 3px 0 2px; }
.loct { display: block; width: 53px; font-size: 12px; }
.locv { flex: 1; height: 21px; background: #fff; border: 1px solid #555; display: flex; align-items: center; padding-left: 2px; position: relative; }
.locv::after { content: ""; position: absolute; right: 8px; top: 5px; width: 6px; height: 6px; border-right: 1px solid #555; border-bottom: 1px solid #555; transform: rotate(45deg); }
.locv .fi { margin-right: 3px; }
.tree { flex: 1; background: #fff; border-top: 2px solid #777; border-left: 2px solid #666; margin: 0 4px 0 1px; display: flex; flex-direction: column; min-height: 0; }
.rows { flex: 1; overflow: hidden; }
.tr { display: flex; align-items: center; height: 17px; white-space: nowrap; color: #223; }
.lv1 { padding-left: 6px; } .lv2 { padding-left: 25px; }
.ex { width: 9px; height: 9px; border: 1px solid #7a8a9a; margin-right: 6px; position: relative; background: #fff; }
.ex::before { content: ""; position: absolute; left: 1px; top: 3px; width: 5px; height: 1px; background: #123; }
.ex::after { content: ""; position: absolute; left: 3px; top: 1px; width: 1px; height: 5px; background: #123; }
.ex.minus::after { display: none; }
.fi { width: 16px; height: 16px; flex: none; margin-right: 5px; display: block; }
.trsel { display: block; background: #0a6ed1; color: #fff; width: 18px; height: 17px; margin-left: -2px; }
.hsb { height: 17px; display: flex; align-items: center; flex: none; }
.ha { display: block; width: 17px; text-align: center; font-size: 18px; line-height: 16px; height: 17px; font-weight: 700; color: #444; font-family: "Liberation Sans", sans-serif; flex: none; }
.ht { flex: 1; background: #ccc; height: 16px; display: block; margin-right: 9px; }
.tabs { height: 26px; display: flex; padding: 6px 0 0 2px; flex: none; gap: 2px; background: #f6f6f6; }
.tab { display: flex; align-items: center; height: 19px; color: #6a6a6a; font-size: 12.500px; white-space: nowrap; border: 1px solid #bbb; border-top: 0; border-radius: 0 0 4px 4px; padding-left: 3px; }
.tab1 { width: 93px; } .tab2 { width: 74px; color: #111; } .tab3 { width: 116px; }
.tabi { width: 16px; height: 16px; margin-right: 3px; flex: none; }
.dot { border: 1px dotted #000; line-height: 15px; }
.status { height: 22px; background: #efefef; flex: none; padding: 2px 0 0 1638px; font-family: "Liberation Sans", sans-serif; }
.stc { display: block; font-size: 12.500px; color: #111; line-height: 18px; }

/* task */
.task { height: 30px; background: linear-gradient(90deg, #d4e5ea, #cfe2ea 60%, #cfdfe5); display: flex; align-items: center; flex: none; }
.tk { display: flex; align-items: center; justify-content: center; height: 30px; flex: none; }
.tk36 { width: 36px; } .tk37 { width: 37px; } .tk32 { width: 32px; } .tk22 { width: 22px; } .tk28 { width: 28px; }
.run { background: linear-gradient(#0078d7, #0078d7) center bottom / 28px 2px no-repeat; }
.active { background: #ecf2f6 linear-gradient(#0078d7, #0078d7) center bottom / 100% 2px no-repeat; }
.ts { width: 20px; height: 20px; display: block; }
.tray { margin-left: auto; display: flex; align-items: center; width: 444px; position: relative; }
.ty { width: 18px; height: 18px; display: block; }
.ime { color: #333; font-size: 15px; }
.clock { display: block; margin-left: 11px; font-family: "Liberation Sans", sans-serif; font-size: 13px; color: #111; width: 40px; }
.notif { width: 16px; height: 18px; margin-left: 14px; flex: none; }

/* overlays */
.menu { position: absolute; background: linear-gradient(90deg, #f7f7f7, #ececec 27px, #fcfcfc 28px); border: 1px solid #8b8b8b; box-shadow: 3px 3px 3px rgba(0,0,0,.28); color: #1a2a3c; font-size: 12.400px; }
.m1 { left: 1671px; top: 376px; width: 175px; height: 195px; }
.m2 { left: 1428px; top: 496px; width: 243px; height: 382px; }
.it { height: 23px; display: flex; align-items: center; white-space: nowrap; position: relative; overflow: hidden; }
.mic { display: block; width: 17px; height: 17px; flex: none; }
.m1 .mic { margin-left: 6px; margin-right: 12px; }
.m2 .mic { margin-left: 6px; margin-right: 13px; }
.off { color: #aaa; }
.sel { background: #b3d3f0; border: 1px solid #0078d7; margin: 0 1px; }
.m2 .sel .mic { margin-left: 5px; }
.m1 .sel .mic { margin-left: 5px; }
.sub { position: absolute; right: 6px; top: 6px; border-left: 5px solid #111; border-top: 4px solid transparent; border-bottom: 4px solid transparent; }
.sep { height: 3px; margin-left: 36px; background: linear-gradient(#bdbdbd, #bdbdbd) 0 1px / 100% 1px no-repeat; }
.tip { position: absolute; left: 1568px; top: 777px; width: 193px; height: 78px; border: 1px solid #8b8b8b; background: linear-gradient(#fff, #c9d9ee); box-shadow: 3px 3px 3px rgba(0,0,0,.3); padding: 6px 4px; color: #4c4c4c; }
.tipt { font-weight: 700; font-size: 12.500px; color: #3c3c3c; line-height: 18px; }
.tipb { margin: 8px 0 0 8px; line-height: 17px; font-size: 12.500px; }
.ime-bar { position: absolute; left: 1660px; top: 1021px; width: 220px; height: 29px; display: flex; align-items: center; background: linear-gradient(#fff, #fff) 5px 4px / 215px 25px no-repeat; }
.ime-s { width: 27px; height: 29px; flex: none; }
.ig { display: block; color: #0f7ae5; font-weight: 700; flex: none; }
.ig1 { font-size: 15px; width: 25px; text-align: center; }
.ig2 { font-size: 15px; width: 24px; text-align: center; }
.ib { width: 16px; height: 16px; margin-left: 8px; flex: none; }
.ig2 + .ib { margin-left: 4px; }
.meter { position: absolute; left: 1910px; top: 985px; width: 10px; height: 58px; background: #333c44; border-radius: 4px 0 0 4px; padding: 6px 2px; }
.mt { display: block; height: 100%; background: repeating-linear-gradient(#555 0 1px, #2a2f33 1px 3px); border-bottom: 14px solid #5fce7a; }
.wm { position: absolute; left: 1808px; top: 1057px; font-family: "Liberation Sans", sans-serif; font-size: 13px; color: rgba(110,110,110,.75); white-space: nowrap; }
```
